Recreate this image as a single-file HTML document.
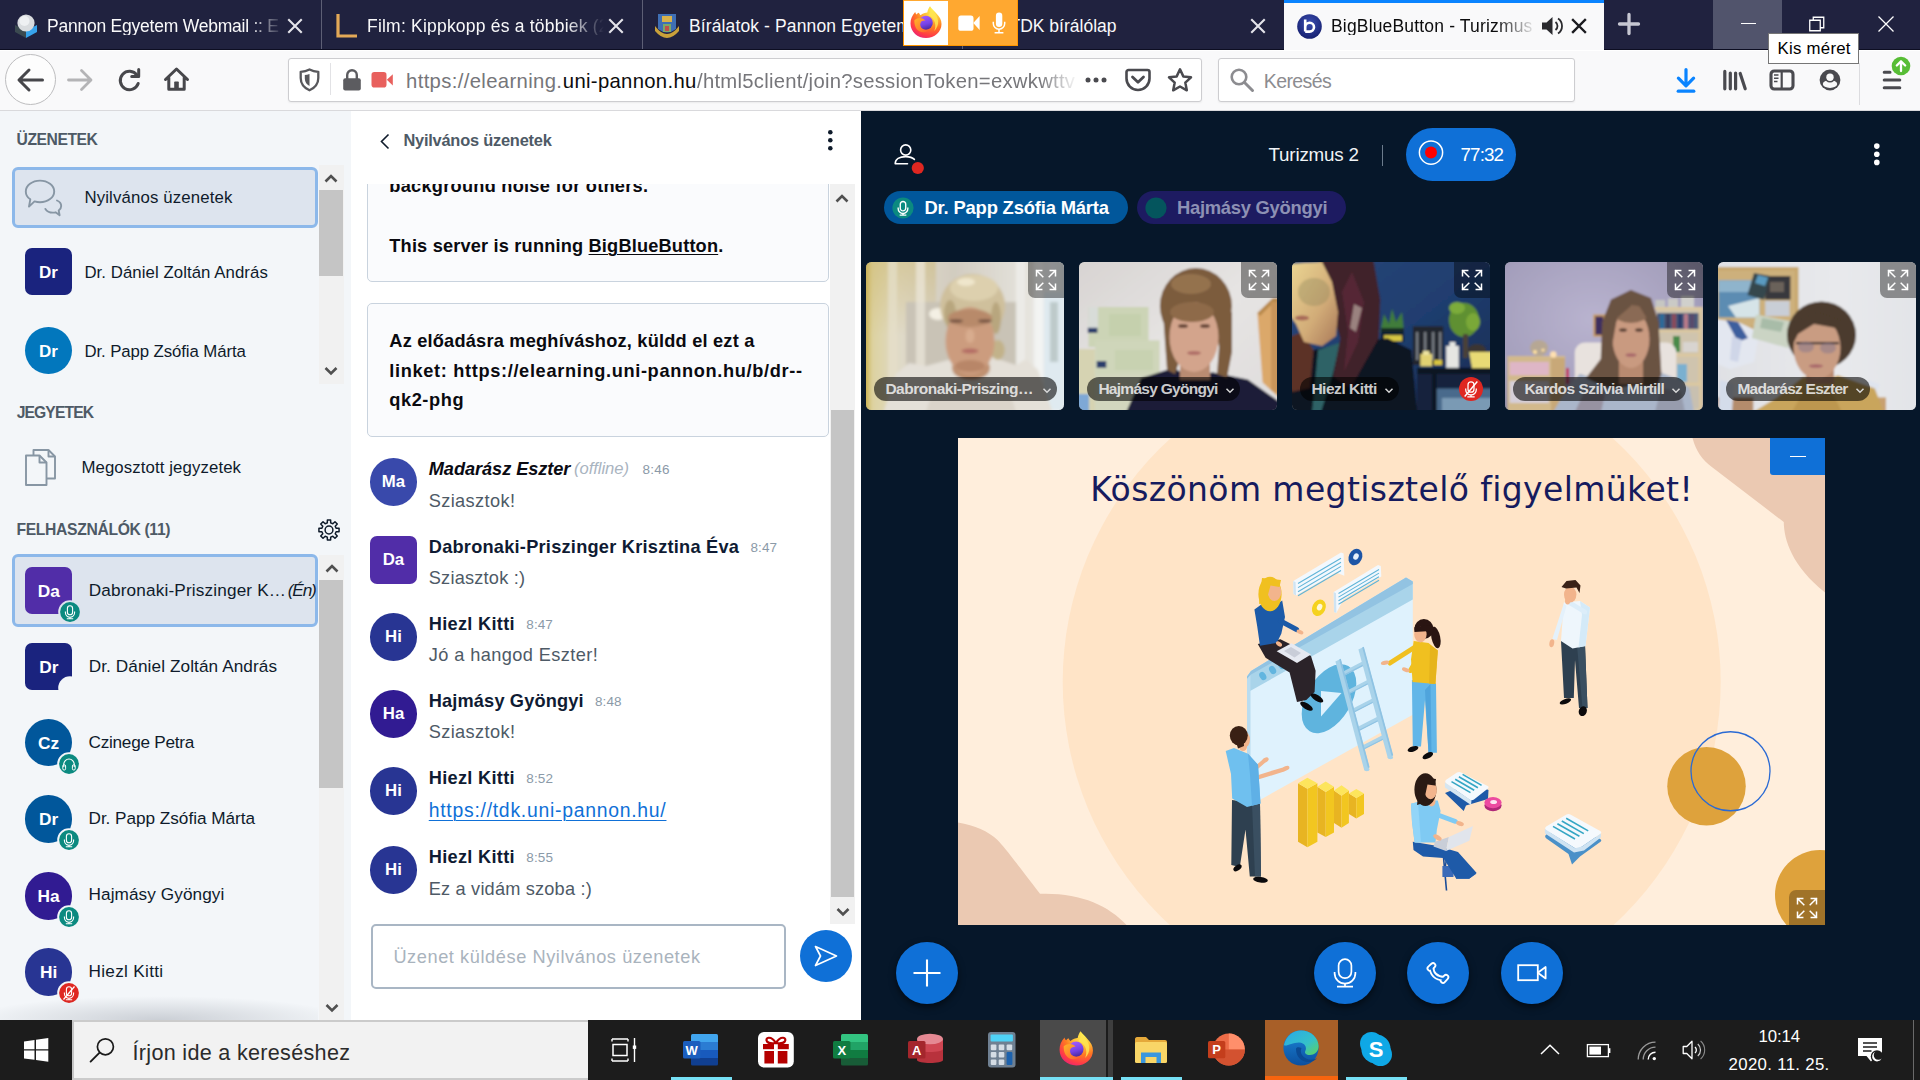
<!DOCTYPE html>
<html lang="hu"><head><meta charset="utf-8"><title>BigBlueButton - Turizmus 2</title>
<style>
html,body{margin:0;padding:0;}
body{width:1920px;height:1080px;overflow:hidden;position:relative;background:#fff;font-family:"Liberation Sans",sans-serif;}
div,span.t,svg{position:absolute;}
span.t{white-space:nowrap;display:block;}
svg{overflow:visible;}
</style></head>
<body>
<div style="left:0.00px;top:111.00px;width:351.00px;height:909.00px;background:#f3f6f9;"></div>
<span class="t" style="left:16.50px;top:132.21px;font-size:15.70px;line-height:15.70px;color:#4e5a66;font-weight:700;letter-spacing:-0.450px;">ÜZENETEK</span>
<div style="left:12.00px;top:167.00px;width:306.00px;height:61.00px;background:#dde4ee;border:3px solid #8cb8ea;border-radius:6px;box-sizing:border-box;"></div>
<svg style="left:24.00px;top:178.00px;" width="40" height="40" viewBox="0 0 40 40"><path d="M16,2.6 C23.8,2.6 30.2,7.4 30.2,13.4 C30.2,19.4 23.8,24.2 16,24.2 C14,24.2 12.2,23.9 10.5,23.4 L5,28.6 L6.3,21.3 C3.5,19.4 1.8,16.6 1.8,13.4 C1.8,7.4 8.2,2.6 16,2.6 Z" stroke="#8796a4" stroke-width="1.9" fill="none" stroke-linejoin="round"/><path d="M33,22.5 C35.6,23.6 37.2,25.6 37.2,28 C37.2,29.8 36.2,31.4 34.7,32.5 L35.6,37.2 L31.6,34.3 C30.8,34.5 29.9,34.6 29,34.6 C25.6,34.6 22.7,33.1 21.4,30.9" stroke="#8796a4" stroke-width="1.9" fill="none" stroke-linejoin="round" stroke-linecap="round"/></svg>
<span class="t" style="left:84.40px;top:190.33px;font-size:16.80px;line-height:16.80px;color:#0f1b2b;letter-spacing:0.145px;">Nyilvános üzenetek</span>
<div style="left:318.75px;top:164.50px;width:24.75px;height:219.50px;background:#f1f1f1;"></div><div style="left:319.35px;top:190.30px;width:23.55px;height:85.30px;background:#c5c5c5;"></div>
<svg style="left:324.20px;top:174.00px;" width="14" height="10" viewBox="0 0 14 10"><path d="M1.5,7.5 L7,2 L12.5,7.5" stroke="#505050" stroke-width="2.6" fill="none"/></svg>
<svg style="left:324.20px;top:366.00px;" width="14" height="10" viewBox="0 0 14 10"><path d="M1.5,2 L7,7.5 L12.5,2" stroke="#505050" stroke-width="2.6" fill="none"/></svg>
<div style="left:25.00px;top:248.00px;width:46.50px;height:46.50px;background:#1a237e;border-radius:7px;"></div>
<span class="t" style="left:8.50px;top:264.36px;width:80px;text-align:center;font-size:17.00px;line-height:17.00px;color:#fff;font-weight:700;">Dr</span>
<span class="t" style="left:84.40px;top:264.53px;font-size:16.80px;line-height:16.80px;color:#0f1b2b;letter-spacing:0.066px;">Dr. Dániel Zoltán András</span>
<div style="left:24.80px;top:327.30px;width:46.80px;height:46.80px;background:#0277bd;border-radius:50%;"></div>
<span class="t" style="left:8.50px;top:343.36px;width:80px;text-align:center;font-size:17.00px;line-height:17.00px;color:#fff;font-weight:700;">Dr</span>
<span class="t" style="left:84.40px;top:343.53px;font-size:16.80px;line-height:16.80px;color:#0f1b2b;letter-spacing:-0.091px;">Dr. Papp Zsófia Márta</span>
<span class="t" style="left:16.65px;top:405.16px;font-size:15.70px;line-height:15.70px;color:#4e5a66;font-weight:700;letter-spacing:-0.900px;">JEGYETEK</span>
<svg style="left:24.00px;top:447.00px;" width="34" height="40" viewBox="0 0 34 40"><path d="M9.5,8.5 V3 H24.5 L31,9.5 V31.5 H22.5" stroke="#8796a4" stroke-width="1.9" fill="none" stroke-linejoin="round"/><path d="M24.5,3 V9.5 H31" stroke="#8796a4" stroke-width="1.9" fill="none" stroke-linejoin="round"/><path d="M2,8.5 H15.5 L22.5,15.5 V38 H2 Z" stroke="#8796a4" stroke-width="1.9" fill="none" stroke-linejoin="round"/><path d="M15.5,8.5 V15.5 H22.5" stroke="#8796a4" stroke-width="1.9" fill="none" stroke-linejoin="round"/></svg>
<span class="t" style="left:81.40px;top:460.33px;font-size:16.80px;line-height:16.80px;color:#0f1b2b;letter-spacing:0.103px;">Megosztott jegyzetek</span>
<span class="t" style="left:16.50px;top:522.46px;font-size:15.70px;line-height:15.70px;color:#4e5a66;font-weight:700;letter-spacing:-0.344px;">FELHASZNÁLÓK (11)</span>
<svg style="left:318.00px;top:519.00px;" width="22" height="22" viewBox="-11 -11 22 22"><g stroke="#0f1b2b" stroke-width="1.5" fill="none"><circle cx="0" cy="0" r="3.9"/><polygon points="10.07,-1.63 10.07,1.63 7.10,1.70 6.22,3.82 8.27,5.97 5.97,8.27 3.82,6.22 1.70,7.10 1.63,10.07 -1.63,10.07 -1.70,7.10 -3.82,6.22 -5.97,8.27 -8.27,5.97 -6.22,3.82 -7.10,1.70 -10.07,1.63 -10.07,-1.63 -7.10,-1.70 -6.22,-3.82 -8.27,-5.97 -5.97,-8.27 -3.82,-6.22 -1.70,-7.10 -1.63,-10.07 1.63,-10.07 1.70,-7.10 3.82,-6.22 5.97,-8.27 8.27,-5.97 6.22,-3.82 7.10,-1.70" stroke-linejoin="round"/></g></svg>
<div style="left:12.00px;top:554.00px;width:306.00px;height:73.00px;background:#dde4ee;border:3px solid #8cb8ea;border-radius:6px;box-sizing:border-box;"></div>
<div style="left:318.75px;top:554.50px;width:24.75px;height:465.50px;background:#f1f1f1;"></div><div style="left:319.35px;top:580.00px;width:23.55px;height:208.00px;background:#c5c5c5;"></div>
<svg style="left:324.50px;top:563.80px;" width="14" height="10" viewBox="0 0 14 10"><path d="M1.5,7.5 L7,2 L12.5,7.5" stroke="#505050" stroke-width="2.6" fill="none"/></svg>
<svg style="left:324.50px;top:1003.30px;" width="14" height="10" viewBox="0 0 14 10"><path d="M1.5,2 L7,7.5 L12.5,2" stroke="#505050" stroke-width="2.6" fill="none"/></svg>
<div style="left:25.00px;top:567.00px;width:47.30px;height:47.30px;background:#512da8;border-radius:7px;"></div>
<span class="t" style="left:8.80px;top:582.71px;width:80px;text-align:center;font-size:17.30px;line-height:17.30px;color:#fff;font-weight:700;">Da</span>
<svg style="left:57.75px;top:599.50px;" width="24" height="24" viewBox="-12 -12 24 24"><circle cx="0" cy="0" r="11.8" fill="#dde4ee"/><circle cx="0" cy="0" r="9.9" fill="#0b8a80"/><rect x="-2.6" y="-6.2" width="5.2" height="9" rx="2.6" stroke="#fff" stroke-width="1.1" fill="none"/><path d="M-4.6,-0.5 V0.6 A4.6,4.6 0 0 0 4.6,0.6 V-0.5" stroke="#fff" stroke-width="1.1" fill="none"/><path d="M0,5.2 V6.6 M-3.2,6.8 H3.2" stroke="#fff" stroke-width="1.1" fill="none"/></svg>
<span class="t" style="left:88.70px;top:581.79px;font-size:17.20px;line-height:17.20px;color:#0f1b2b;letter-spacing:0.154px;">Dabronaki-Priszinger K…</span>
<span class="t" style="left:287.80px;top:581.79px;font-size:17.20px;line-height:17.20px;color:#0f1b2b;font-style:italic;letter-spacing:-1.161px;">(Én)</span>
<div style="left:25.00px;top:643.00px;width:47.30px;height:47.30px;background:#1a237e;border-radius:7px;"></div>
<span class="t" style="left:8.80px;top:658.71px;width:80px;text-align:center;font-size:17.30px;line-height:17.30px;color:#fff;font-weight:700;">Dr</span>
<svg style="left:57.75px;top:676.00px;" width="24" height="24" viewBox="-12 -12 24 24"><circle cx="0" cy="0" r="11.8" fill="#f3f6f9"/></svg>
<span class="t" style="left:88.70px;top:657.79px;font-size:17.20px;line-height:17.20px;color:#0f1b2b;letter-spacing:0.091px;">Dr. Dániel Zoltán András</span>
<div style="left:24.90px;top:719.00px;width:47.40px;height:47.40px;background:#01579b;border-radius:50%;"></div>
<span class="t" style="left:8.60px;top:734.91px;width:80px;text-align:center;font-size:17.30px;line-height:17.30px;color:#fff;font-weight:700;">Cz</span>
<svg style="left:57.30px;top:751.80px;" width="24" height="24" viewBox="-12 -12 24 24"><circle cx="0" cy="0" r="11.8" fill="#f3f6f9"/><circle cx="0" cy="0" r="9.9" fill="#0b8a80"/><path d="M-5.2,3 V0.2 A5.2,5.2 0 0 1 5.2,0.2 V3" stroke="#fff" stroke-width="1.1" fill="none"/><rect x="-6.2" y="0.8" width="2.8" height="5.2" rx="1.2" stroke="#fff" stroke-width="1" fill="none"/><rect x="3.4" y="0.8" width="2.8" height="5.2" rx="1.2" stroke="#fff" stroke-width="1" fill="none"/></svg>
<span class="t" style="left:88.50px;top:734.09px;font-size:17.20px;line-height:17.20px;color:#0f1b2b;letter-spacing:-0.260px;">Czinege Petra</span>
<div style="left:24.90px;top:795.40px;width:47.40px;height:47.40px;background:#01579b;border-radius:50%;"></div>
<span class="t" style="left:8.60px;top:811.31px;width:80px;text-align:center;font-size:17.30px;line-height:17.30px;color:#fff;font-weight:700;">Dr</span>
<svg style="left:57.30px;top:828.20px;" width="24" height="24" viewBox="-12 -12 24 24"><circle cx="0" cy="0" r="11.8" fill="#f3f6f9"/><circle cx="0" cy="0" r="9.9" fill="#0b8a80"/><rect x="-2.6" y="-6.2" width="5.2" height="9" rx="2.6" stroke="#fff" stroke-width="1.1" fill="none"/><path d="M-4.6,-0.5 V0.6 A4.6,4.6 0 0 0 4.6,0.6 V-0.5" stroke="#fff" stroke-width="1.1" fill="none"/><path d="M0,5.2 V6.6 M-3.2,6.8 H3.2" stroke="#fff" stroke-width="1.1" fill="none"/></svg>
<span class="t" style="left:88.50px;top:810.19px;font-size:17.20px;line-height:17.20px;color:#0f1b2b;letter-spacing:-0.034px;">Dr. Papp Zsófia Márta</span>
<div style="left:24.90px;top:872.20px;width:47.40px;height:47.40px;background:#311b92;border-radius:50%;"></div>
<span class="t" style="left:8.60px;top:888.11px;width:80px;text-align:center;font-size:17.30px;line-height:17.30px;color:#fff;font-weight:700;">Ha</span>
<svg style="left:57.30px;top:905.00px;" width="24" height="24" viewBox="-12 -12 24 24"><circle cx="0" cy="0" r="11.8" fill="#f3f6f9"/><circle cx="0" cy="0" r="9.9" fill="#0b8a80"/><rect x="-2.6" y="-6.2" width="5.2" height="9" rx="2.6" stroke="#fff" stroke-width="1.1" fill="none"/><path d="M-4.6,-0.5 V0.6 A4.6,4.6 0 0 0 4.6,0.6 V-0.5" stroke="#fff" stroke-width="1.1" fill="none"/><path d="M0,5.2 V6.6 M-3.2,6.8 H3.2" stroke="#fff" stroke-width="1.1" fill="none"/></svg>
<span class="t" style="left:88.50px;top:886.39px;font-size:17.20px;line-height:17.20px;color:#0f1b2b;letter-spacing:0.079px;">Hajmásy Gyöngyi</span>
<div style="left:24.90px;top:948.20px;width:47.40px;height:47.40px;background:#283593;border-radius:50%;"></div>
<span class="t" style="left:8.60px;top:964.11px;width:80px;text-align:center;font-size:17.30px;line-height:17.30px;color:#fff;font-weight:700;">Hi</span>
<svg style="left:57.30px;top:981.00px;" width="24" height="24" viewBox="-12 -12 24 24"><circle cx="0" cy="0" r="11.8" fill="#f3f6f9"/><circle cx="0" cy="0" r="9.9" fill="#df2721"/><rect x="-2.6" y="-6.2" width="5.2" height="9" rx="2.6" stroke="#fff" stroke-width="1.1" fill="none"/><path d="M-4.6,-0.5 V0.6 A4.6,4.6 0 0 0 4.6,0.6 V-0.5" stroke="#fff" stroke-width="1.1" fill="none"/><path d="M0,5.2 V6.6 M-3.2,6.8 H3.2" stroke="#fff" stroke-width="1.1" fill="none"/><path d="M-5.5,6.5 L5.5,-6.5" stroke="#fff" stroke-width="1.2"/></svg>
<span class="t" style="left:88.50px;top:962.59px;font-size:17.20px;line-height:17.20px;color:#0f1b2b;letter-spacing:0.306px;">Hiezl Kitti</span>
<div style="left:0.00px;top:996.00px;width:318.00px;height:24.00px;background:radial-gradient(ellipse 60% 100% at 50% 100%,rgba(40,50,70,0.20),rgba(40,50,70,0) 100%);"></div>
<div style="left:351.00px;top:111.00px;width:510.00px;height:909.00px;background:#fff;"></div>
<svg style="left:378.00px;top:133.00px;" width="14" height="17" viewBox="0 0 14 17"><path d="M10.5,1.5 L3.5,8.5 L10.5,15.5" stroke="#0f1b2b" stroke-width="1.6" fill="none"/></svg>
<span class="t" style="left:403.40px;top:132.07px;font-size:16.40px;line-height:16.40px;color:#4e5a66;font-weight:700;letter-spacing:-0.220px;">Nyilvános üzenetek</span>
<svg style="left:826.00px;top:128.00px;" width="9" height="24" viewBox="0 0 9 24"><circle cx="4.3" cy="4.2" r="2.3" fill="#0f1b2b"/><circle cx="4.3" cy="12.3" r="2.3" fill="#0f1b2b"/><circle cx="4.3" cy="20.3" r="2.3" fill="#0f1b2b"/></svg>
<div style="left:352.00px;top:184.00px;width:478.00px;height:738.00px;overflow:hidden;"><div style="left:15.00px;top:-64.00px;width:462.00px;height:161.70px;background:#fafbfd;border:1px solid #c9d3de;border-radius:5px;box-sizing:border-box;"></div>
<span class="t" style="left:37.30px;top:-7.36px;font-size:18.20px;line-height:18.20px;color:#0a0a0f;font-weight:700;letter-spacing:0.262px;">background noise for others.</span>
<span class="t" style="left:37.30px;top:53.04px;font-size:18.20px;line-height:18.20px;color:#0a0a0f;font-weight:700;letter-spacing:0.182px;">This server is running <span style="text-decoration:underline;text-decoration-thickness:1.3px;text-underline-offset:1.5px">BigBlueButton</span>.</span>
<div style="left:15.30px;top:119.20px;width:461.50px;height:133.50px;background:#fafbfd;border:1px solid #c9d3de;border-radius:5px;box-sizing:border-box;"></div>
<span class="t" style="left:37.30px;top:148.09px;font-size:18.20px;line-height:18.20px;color:#0a0a0f;font-weight:700;letter-spacing:0.210px;">Az előadásra meghíváshoz, küldd el ezt a</span>
<span class="t" style="left:37.30px;top:177.59px;font-size:18.20px;line-height:18.20px;color:#0a0a0f;font-weight:700;letter-spacing:0.662px;">linket: https://elearning.uni-pannon.hu/b/dr--</span>
<span class="t" style="left:37.30px;top:207.34px;font-size:18.20px;line-height:18.20px;color:#0a0a0f;font-weight:700;letter-spacing:0.578px;">qk2-phg</span>
<div style="left:17.90px;top:274.20px;width:47.20px;height:47.60px;background:#3949ab;border-radius:50%;"></div><span class="t" style="left:1.50px;top:290.23px;width:80px;text-align:center;font-size:16.80px;line-height:16.80px;color:#fff;font-weight:700;">Ma</span>
<span class="t" style="left:76.75px;top:276.34px;font-size:18.20px;line-height:18.20px;color:#0a0a12;font-weight:700;font-style:italic;letter-spacing:-0.060px;">Madarász Eszter</span>
<span class="t" style="left:222.00px;top:277.20px;font-size:16.60px;line-height:16.60px;color:#a9b4bf;font-style:italic;letter-spacing:-0.043px;">(offline)</span>
<span class="t" style="left:290.50px;top:279.32px;font-size:13.50px;line-height:13.50px;color:#8b9aa8;letter-spacing:0.240px;">8:46</span>
<span class="t" style="left:76.75px;top:308.09px;font-size:18.20px;line-height:18.20px;color:#4e5a66;letter-spacing:0.368px;">Sziasztok!</span>
<div style="left:17.80px;top:352.20px;width:47.20px;height:47.60px;background:#512da8;border-radius:7px;"></div><span class="t" style="left:1.40px;top:368.23px;width:80px;text-align:center;font-size:16.80px;line-height:16.80px;color:#fff;font-weight:700;">Da</span>
<span class="t" style="left:76.75px;top:353.74px;font-size:18.20px;line-height:18.20px;color:#0f1b33;font-weight:700;letter-spacing:0.242px;">Dabronaki-Priszinger Krisztina Éva</span>
<span class="t" style="left:398.50px;top:356.72px;font-size:13.50px;line-height:13.50px;color:#8b9aa8;letter-spacing:0.073px;">8:47</span>
<span class="t" style="left:76.75px;top:384.74px;font-size:18.20px;line-height:18.20px;color:#4e5a66;letter-spacing:0.209px;">Sziasztok :)</span>
<div style="left:17.90px;top:429.20px;width:47.20px;height:47.60px;background:#283593;border-radius:50%;"></div><span class="t" style="left:1.50px;top:445.23px;width:80px;text-align:center;font-size:16.80px;line-height:16.80px;color:#fff;font-weight:700;">Hi</span>
<span class="t" style="left:76.75px;top:430.94px;font-size:18.20px;line-height:18.20px;color:#0f1b33;font-weight:700;letter-spacing:0.304px;">Hiezl Kitti</span>
<span class="t" style="left:174.30px;top:433.92px;font-size:13.50px;line-height:13.50px;color:#8b9aa8;letter-spacing:0.073px;">8:47</span>
<span class="t" style="left:76.75px;top:461.84px;font-size:18.20px;line-height:18.20px;color:#4e5a66;letter-spacing:0.401px;">Jó a hangod Eszter!</span>
<div style="left:17.90px;top:506.20px;width:47.20px;height:47.60px;background:#311b92;border-radius:50%;"></div><span class="t" style="left:1.50px;top:522.23px;width:80px;text-align:center;font-size:16.80px;line-height:16.80px;color:#fff;font-weight:700;">Ha</span>
<span class="t" style="left:76.75px;top:508.24px;font-size:18.20px;line-height:18.20px;color:#0f1b33;font-weight:700;letter-spacing:0.154px;">Hajmásy Gyöngyi</span>
<span class="t" style="left:242.90px;top:511.22px;font-size:13.50px;line-height:13.50px;color:#8b9aa8;letter-spacing:0.140px;">8:48</span>
<span class="t" style="left:76.75px;top:539.14px;font-size:18.20px;line-height:18.20px;color:#4e5a66;letter-spacing:0.368px;">Sziasztok!</span>
<div style="left:17.90px;top:583.30px;width:47.20px;height:47.60px;background:#283593;border-radius:50%;"></div><span class="t" style="left:1.50px;top:599.33px;width:80px;text-align:center;font-size:16.80px;line-height:16.80px;color:#fff;font-weight:700;">Hi</span>
<span class="t" style="left:76.75px;top:584.94px;font-size:18.20px;line-height:18.20px;color:#0f1b33;font-weight:700;letter-spacing:0.304px;">Hiezl Kitti</span>
<span class="t" style="left:174.30px;top:587.92px;font-size:13.50px;line-height:13.50px;color:#8b9aa8;letter-spacing:0.140px;">8:52</span>
<span class="t" style="left:76.75px;top:616.73px;font-size:19.40px;line-height:19.40px;color:#0f70d7;letter-spacing:0.726px;text-decoration:underline;text-decoration-thickness:1.3px;text-underline-offset:2.5px;">https://tdk.uni-pannon.hu/</span>
<div style="left:17.90px;top:662.30px;width:47.20px;height:47.60px;background:#283593;border-radius:50%;"></div><span class="t" style="left:1.50px;top:678.33px;width:80px;text-align:center;font-size:16.80px;line-height:16.80px;color:#fff;font-weight:700;">Hi</span>
<span class="t" style="left:76.75px;top:664.14px;font-size:18.20px;line-height:18.20px;color:#0f1b33;font-weight:700;letter-spacing:0.304px;">Hiezl Kitti</span>
<span class="t" style="left:174.30px;top:667.12px;font-size:13.50px;line-height:13.50px;color:#8b9aa8;letter-spacing:0.140px;">8:55</span>
<span class="t" style="left:76.75px;top:695.54px;font-size:18.20px;line-height:18.20px;color:#4e5a66;letter-spacing:0.182px;">Ez a vidám szoba :)</span></div>
<div style="left:830.00px;top:184.00px;width:24.70px;height:739.50px;background:#f1f1f1;"></div><div style="left:830.60px;top:410.00px;width:23.50px;height:487.40px;background:#c5c5c5;"></div>
<svg style="left:835.40px;top:193.60px;" width="14" height="10" viewBox="0 0 14 10"><path d="M1.5,7.5 L7,2 L12.5,7.5" stroke="#505050" stroke-width="2.6" fill="none"/></svg>
<svg style="left:835.50px;top:906.50px;" width="14" height="10" viewBox="0 0 14 10"><path d="M1.5,2 L7,7.5 L12.5,2" stroke="#505050" stroke-width="2.6" fill="none"/></svg>
<div style="left:371.40px;top:923.50px;width:414.60px;height:65.20px;background:#fff;border:2px solid #a9b6c4;border-radius:5px;box-sizing:border-box;"></div>
<span class="t" style="left:393.40px;top:947.84px;font-size:18.20px;line-height:18.20px;color:#a9b3bd;letter-spacing:0.577px;">Üzenet küldése Nyilvános üzenetek</span>
<div style="left:800.00px;top:930.00px;width:52.00px;height:52.00px;background:#0f70d7;border-radius:50%;"></div>
<svg style="left:813.00px;top:944.00px;" width="26" height="24" viewBox="0 0 26 24"><path d="M2.5,2.5 L23.5,12 L2.5,21.5 L7.5,12 Z" stroke="#fff" stroke-width="1.7" fill="none" stroke-linejoin="round"/></svg>
<div style="left:861.00px;top:111.00px;width:1059.00px;height:909.00px;background:#06172a;"></div>
<svg style="left:893.00px;top:142.00px;" width="28" height="34" viewBox="0 0 28 34"><circle cx="12.7" cy="8" r="5.1" stroke="#fff" stroke-width="1.6" fill="none"/><path d="M2.2,21.8 C2.2,17.2 6.6,14.6 12.7,14.6 C16.6,14.6 19.6,15.6 21.4,17.4 M2.2,21.8 H14.5" stroke="#fff" stroke-width="1.6" fill="none" stroke-linecap="round"/><circle cx="24.8" cy="26" r="6.1" fill="#df2721"/></svg>
<span class="t" style="left:1268.50px;top:146.24px;font-size:18.80px;line-height:18.80px;color:#f0f3f6;letter-spacing:-0.188px;">Turizmus 2</span>
<div style="left:1382.20px;top:144.50px;width:1.30px;height:21.50px;background:#6b7b8c;"></div>
<div style="left:1405.80px;top:127.70px;width:110.50px;height:53.20px;background:#0f70d7;border-radius:27px;"></div>
<svg style="left:1417.00px;top:139.00px;" width="28" height="28" viewBox="0 0 28 28"><circle cx="14" cy="13.6" r="11.6" stroke="#fff" stroke-width="1.5" fill="none"/><circle cx="14" cy="13.6" r="6" fill="#f00"/></svg>
<span class="t" style="left:1460.60px;top:146.24px;font-size:18.80px;line-height:18.80px;color:#fff;letter-spacing:-0.925px;">77:32</span>
<svg style="left:1872.00px;top:142.00px;" width="10" height="25" viewBox="0 0 10 25"><circle cx="4.8" cy="4.1" r="2.8" fill="#fff"/><circle cx="4.8" cy="12.3" r="2.8" fill="#fff"/><circle cx="4.8" cy="20.4" r="2.8" fill="#fff"/></svg>
<div style="left:884.30px;top:191.20px;width:243.70px;height:32.60px;background:#01579b;border-radius:17px;"></div>
<svg style="left:892.00px;top:196.50px;" width="22" height="22" viewBox="-11 -11 22 22"><circle cx="0" cy="0" r="10.6" fill="#0b8a80"/><g transform="scale(1.05)"><rect x="-2.6" y="-6.2" width="5.2" height="9" rx="2.6" stroke="#fff" stroke-width="1.3" fill="none"/><path d="M-4.6,-0.5 V0.6 A4.6,4.6 0 0 0 4.6,0.6 V-0.5" stroke="#fff" stroke-width="1.3" fill="none"/><path d="M0,5.2 V6.6 M-3.2,6.8 H3.2" stroke="#fff" stroke-width="1.3" fill="none"/></g></svg>
<span class="t" style="left:924.50px;top:199.47px;font-size:18.40px;line-height:18.40px;color:#fff;font-weight:700;letter-spacing:-0.177px;">Dr. Papp Zsófia Márta</span>
<div style="left:1137.00px;top:191.20px;width:209.30px;height:32.60px;background:#1d1b61;border-radius:17px;"></div>
<svg style="left:1144.50px;top:196.50px;" width="22" height="22" viewBox="0 0 22 22"><circle cx="11" cy="11" r="10.6" fill="#04555d"/></svg>
<span class="t" style="left:1177.00px;top:199.47px;font-size:18.40px;line-height:18.40px;color:#8d91b4;font-weight:700;letter-spacing:-0.275px;">Hajmásy Gyöngyi</span>
<div style="left:866.00px;top:261.80px;width:198.00px;height:148.00px;border-radius:5.5px;overflow:hidden;background:#888;"><svg style="left:0;top:0" width="198" height="148" viewBox="0 0 198 148"><defs><filter id="pb0" x="-10%" y="-10%" width="120%" height="120%"><feGaussianBlur stdDeviation="1.4"/></filter><linearGradient id="p0a" x1="0" y1="0" x2="1" y2="0"><stop offset="0" stop-color="#8f7a1c"/><stop offset="0.035" stop-color="#c4a838"/><stop offset="0.075" stop-color="#ddd2a0"/><stop offset="0.2" stop-color="#e0dac8"/><stop offset="0.45" stop-color="#d2ccc0"/><stop offset="0.8" stop-color="#e6e4de"/><stop offset="0.9" stop-color="#eef2f4"/><stop offset="1" stop-color="#dfe6e8"/></linearGradient><linearGradient id="p0b" x1="0" y1="0" x2="0" y2="1"><stop offset="0" stop-color="#c8b060" stop-opacity="0.45"/><stop offset="0.5" stop-color="#c8b060" stop-opacity="0"/></linearGradient></defs><g filter="url(#pb0)"><rect x="-10.0" y="-10.0" width="218.0" height="168.0" fill="url(#p0a)" /><rect x="-10.0" y="-10.0" width="80.0" height="168.0" fill="url(#p0b)" /><rect x="40.0" y="40.0" width="110.0" height="70.0" fill="#c9c3b6" /><ellipse cx="72.0" cy="52.0" rx="9.0" ry="6.0" fill="#f4f0e4" /><rect x="22.0" y="-5.0" width="9.0" height="160.0" fill="#e6e0cc" opacity="0.7"/><rect x="50.0" y="-5.0" width="9.0" height="160.0" fill="#ece8dc" opacity="0.7"/><rect x="150.0" y="-5.0" width="9.0" height="160.0" fill="#f0efec" opacity="0.7"/><rect x="168.0" y="-5.0" width="9.0" height="160.0" fill="#f6f8f8" opacity="0.7"/><rect x="178.0" y="30.0" width="20.0" height="118.0" fill="#dfeaf0" /><rect x="184.0" y="40.0" width="8.0" height="60.0" fill="#a8b4b0" opacity="0.6"/><polygon points="17.7,150.0 30.0,112.0 42.9,101.0 60.0,104.0 85.9,96.9 127.0,95.4 150.0,103.0 160.0,97.0 172.0,108.0 186.6,150.0" fill="#e4e0d8" /><polygon points="60.0,150.0 70.0,118.0 140.0,118.0 150.0,150.0" fill="#dad4ca" /><ellipse cx="105.0" cy="106.0" rx="19.0" ry="12.0" fill="#bf9070" /><ellipse cx="131.8" cy="88.0" rx="7.0" ry="10.0" fill="#c2b28a" /><ellipse cx="106.6" cy="44.0" rx="32.5" ry="32.0" fill="#cfc09c" /><ellipse cx="108.0" cy="26.0" rx="24.0" ry="13.0" fill="#ddd0ae" /><ellipse cx="100.0" cy="20.0" rx="9.0" ry="4.0" fill="#efe6cc" /><ellipse cx="84.0" cy="52.0" rx="6.0" ry="14.0" fill="#b8a67e" /><ellipse cx="130.0" cy="56.0" rx="5.0" ry="16.0" fill="#b8a67e" /><ellipse cx="104.0" cy="79.0" rx="24.5" ry="34.0" fill="#cc9c7e" /><ellipse cx="104.0" cy="56.0" rx="22.0" ry="9.0" fill="#b88a6a" /><ellipse cx="90.0" cy="59.0" rx="7.0" ry="1.6" fill="#6a4a3c" /><ellipse cx="119.0" cy="59.0" rx="7.0" ry="1.6" fill="#6a4a3c" /><ellipse cx="104.0" cy="74.0" rx="4.5" ry="7.0" fill="#d8ac8e" /><ellipse cx="104.0" cy="89.0" rx="8.5" ry="2.6" fill="#b46c64" /><ellipse cx="104.0" cy="104.0" rx="15.0" ry="6.0" fill="#b88668" /></g></svg><div style="left:162.00px;top:0.00px;width:36.00px;height:36.30px;background:rgba(0,0,0,0.4);border-radius:0 5px 0 7px;"></div><svg style="left:168.00px;top:6.20px;" width="24" height="24" viewBox="-12 -12 24 24"><g stroke="#fff" stroke-width="1.5" fill="none" stroke-linecap="square"><path d="M-9.5,-9.5 L-3.2,-3.2 M-9.5,-4.3 V-9.5 H-4.3"/><path d="M9.5,-9.5 L3.2,-3.2 M9.5,-4.3 V-9.5 H4.3"/><path d="M-9.5,9.5 L-3.2,3.2 M-9.5,4.3 V9.5 H-4.3"/><path d="M9.5,9.5 L3.2,3.2 M9.5,4.3 V9.5 H4.3"/></g></svg><div style="left:8.00px;top:115.40px;width:183.00px;height:23.60px;background:rgba(0,0,0,0.58);border-radius:12px;"></div></div>
<span class="t" style="left:885.40px;top:381.23px;font-size:15.50px;line-height:15.50px;color:rgba(255,255,255,0.8);font-weight:700;letter-spacing:-0.486px;">Dabronaki-Priszing…</span>
<svg style="left:1042.40px;top:386.50px;" width="10" height="7" viewBox="0 0 10 7"><path d="M1.5,1.8 L5,5.2 L8.5,1.8" stroke="#d8d8d8" stroke-width="1.5" fill="none"/></svg>
<div style="left:1079.00px;top:261.80px;width:198.00px;height:148.00px;border-radius:5.5px;overflow:hidden;background:#888;"><svg style="left:0;top:0" width="198" height="148" viewBox="0 0 198 148"><defs><filter id="pb1" x="-10%" y="-10%" width="120%" height="120%"><feGaussianBlur stdDeviation="1.3"/></filter><linearGradient id="p1a" x1="0" y1="0" x2="1" y2="1"><stop offset="0" stop-color="#d6d2d0"/><stop offset="0.5" stop-color="#e6e4e3"/><stop offset="1" stop-color="#dedcdc"/></linearGradient></defs><g filter="url(#pb1)"><rect x="-10.0" y="-10.0" width="218.0" height="168.0" fill="url(#p1a)" /><rect x="9.5" y="45.0" width="60.0" height="40.0" fill="#ccd4b6" /><rect x="16.2" y="78.4" width="64.4" height="37.6" fill="#cfd6ba" /><rect x="-5.0" y="87.0" width="21.0" height="63.0" fill="#d6d3b2" /><rect x="16.0" y="112.0" width="72.0" height="38.0" fill="#d2d6be" /><rect x="9.5" y="45.0" width="9.5" height="21.0" fill="#d8dcd8" /><rect x="30.0" y="52.0" width="32.0" height="22.0" fill="#c2cfaa" opacity="0.7"/><rect x="36.0" y="88.0" width="38.0" height="20.0" fill="#c5d0ae" opacity="0.7"/><rect x="8.8" y="65.8" width="9.6" height="5.2" fill="#2c3c6c" /><rect x="17.7" y="99.0" width="9.6" height="6.8" fill="#2c3c6c" /><rect x="-5.0" y="132.0" width="15.0" height="18.0" fill="#7ea8d6" /><polygon points="178.4,51.0 194.0,36.0 205.0,36.0 205.0,140.0 183.6,120.6" fill="#dba86a" /><polygon points="178.4,51.0 194.0,36.0 205.0,36.0 205.0,40.0 195.0,40.0 181.0,54.0" fill="#b98a4c" /><polygon points="192.0,40.0 205.0,40.0 205.0,135.0 192.0,128.0" fill="#c9955a" /><polygon points="47.3,150.0 62.1,116.2 94.7,105.8 114.0,117.6 133.2,110.2 168.8,117.6 205.0,143.0 205.0,150.0" fill="#1b1e38" /><rect x="101.0" y="98.0" width="30.0" height="20.0" fill="#b98c72" /><ellipse cx="116.9" cy="44.0" rx="36.0" ry="38.0" fill="#7b5c3e" /><polygon points="84.0,50.0 102.0,50.0 100.0,100.0 96.0,112.0 88.0,108.0 86.0,80.0" fill="#7b5c3e" /><polygon points="134.0,50.0 153.0,50.0 153.0,90.0 148.0,116.0 138.0,112.0 140.0,85.0" fill="#7b5c3e" /><ellipse cx="112.0" cy="22.0" rx="20.0" ry="10.0" fill="#94724e" /><ellipse cx="115.0" cy="75.0" rx="24.5" ry="35.0" fill="#d3a48c" /><ellipse cx="113.0" cy="50.0" rx="22.0" ry="10.0" fill="#8e6a48" /><ellipse cx="104.0" cy="64.0" rx="5.0" ry="2.0" fill="#6a4a3a" /><ellipse cx="126.0" cy="64.0" rx="5.0" ry="2.0" fill="#6a4a3a" /><ellipse cx="115.0" cy="91.0" rx="7.0" ry="2.0" fill="#b07068" /></g></svg><div style="left:162.00px;top:0.00px;width:36.00px;height:36.30px;background:rgba(0,0,0,0.4);border-radius:0 5px 0 7px;"></div><svg style="left:168.00px;top:6.20px;" width="24" height="24" viewBox="-12 -12 24 24"><g stroke="#fff" stroke-width="1.5" fill="none" stroke-linecap="square"><path d="M-9.5,-9.5 L-3.2,-3.2 M-9.5,-4.3 V-9.5 H-4.3"/><path d="M9.5,-9.5 L3.2,-3.2 M9.5,-4.3 V-9.5 H4.3"/><path d="M-9.5,9.5 L-3.2,3.2 M-9.5,4.3 V9.5 H-4.3"/><path d="M9.5,9.5 L3.2,3.2 M9.5,4.3 V9.5 H4.3"/></g></svg><div style="left:8.00px;top:115.40px;width:152.60px;height:23.60px;background:rgba(0,0,0,0.58);border-radius:12px;"></div></div>
<span class="t" style="left:1098.40px;top:381.23px;font-size:15.50px;line-height:15.50px;color:rgba(255,255,255,0.8);font-weight:700;letter-spacing:-0.720px;">Hajmásy Gyöngyi</span>
<svg style="left:1225.00px;top:386.50px;" width="10" height="7" viewBox="0 0 10 7"><path d="M1.5,1.8 L5,5.2 L8.5,1.8" stroke="#d8d8d8" stroke-width="1.5" fill="none"/></svg>
<div style="left:1292.00px;top:261.80px;width:198.00px;height:148.00px;border-radius:5.5px;overflow:hidden;background:#888;"><svg style="left:0;top:0" width="198" height="148" viewBox="0 0 198 148"><defs><filter id="pb2" x="-10%" y="-10%" width="120%" height="120%"><feGaussianBlur stdDeviation="1.3"/></filter><linearGradient id="p2a" x1="0" y1="0" x2="1" y2="1"><stop offset="0" stop-color="#2a4878"/><stop offset="0.5" stop-color="#203e70"/><stop offset="1" stop-color="#15294c"/></linearGradient><linearGradient id="p2f" x1="0" y1="0" x2="1" y2="1"><stop offset="0" stop-color="#ecd894"/><stop offset="0.6" stop-color="#d2ac78"/><stop offset="1" stop-color="#a87858"/></linearGradient></defs><g filter="url(#pb2)"><rect x="-10.0" y="-10.0" width="218.0" height="168.0" fill="url(#p2a)" /><rect x="125.0" y="111.0" width="80.0" height="39.0" fill="#15223c" /><rect x="144.6" y="126.5" width="60.4" height="23.5" fill="#4a6a8c" /><rect x="150.0" y="136.0" width="50.0" height="14.0" fill="#7a9ab4" /><rect x="125.0" y="105.8" width="80.0" height="6.2" fill="#0c1424" /><rect x="140.0" y="112.0" width="4.5" height="38.0" fill="#0c1424" /><rect x="120.9" y="64.3" width="30.4" height="38.7" fill="#22252d" /><rect x="124.0" y="70.0" width="2.4" height="28.0" fill="#8d9198" opacity="0.8"/><rect x="132.0" y="70.0" width="2.4" height="28.0" fill="#8d9198" opacity="0.8"/><rect x="140.0" y="70.0" width="2.4" height="28.0" fill="#8d9198" opacity="0.8"/><rect x="147.0" y="70.0" width="2.4" height="28.0" fill="#8d9198" opacity="0.8"/><rect x="142.0" y="98.0" width="8.0" height="5.0" fill="#d8c440" /><polygon points="88.3,70.0 92.0,52.0 97.0,62.0 100.0,46.5 104.0,60.0 110.0,50.0 112.0,70.0" fill="#3f7c3a" /><rect x="89.0" y="66.0" width="23.0" height="14.0" fill="#0e1420" opacity="0.8"/><rect x="92.0" y="73.2" width="18.0" height="5.8" fill="#d6c642" /><ellipse cx="172.0" cy="58.0" rx="15.0" ry="17.0" fill="#5f9030" /><ellipse cx="165.0" cy="46.0" rx="8.0" ry="6.0" fill="#7cac3a" /><ellipse cx="181.0" cy="60.0" rx="7.0" ry="9.0" fill="#7aa838" /><rect x="171.0" y="72.0" width="5.0" height="24.0" fill="#4a4038" /><ellipse cx="185.0" cy="88.0" rx="9.0" ry="6.0" fill="#3a3430" /><polygon points="177.2,90.0 205.0,90.0 205.0,106.0 180.0,106.0" fill="#e8da74" /><rect x="154.2" y="84.0" width="12.6" height="21.8" fill="#e6e6e2" /><rect x="157.5" y="80.0" width="6.0" height="5.0" fill="#e6e6e2" /><rect x="128.3" y="92.0" width="11.8" height="12.3" fill="#e2d272" /><rect x="131.0" y="89.0" width="6.5" height="4.0" fill="#eee4a0" /><polygon points="-5.0,150.0 -5.0,105.8 21.6,88.0 58.7,80.6 95.7,76.2 119.4,88.0 125.3,150.0" fill="#0e1220" /><polygon points="26.0,88.0 48.3,80.6 40.9,111.7 29.0,150.0 20.0,150.0 23.9,111.7" fill="#2e6266" /><polygon points="27.0,-5.0 80.9,-5.0 88.3,37.6 86.8,76.2 75.0,96.9 58.7,126.5 40.9,114.7 48.3,76.2 36.4,37.6 27.6,11.0" fill="#3f2129" /><polygon points="60.0,10.0 72.0,40.0 66.0,80.0 52.0,110.0 56.0,70.0 50.0,30.0" fill="#5a2a38" opacity="0.8"/><polygon points="-5.0,76.0 10.0,70.0 21.6,88.0 18.0,126.0 0.0,130.0 -5.0,120.0" fill="#5c3228" /><polygon points="62.0,42.0 70.0,46.0 64.0,70.0 58.0,66.0" fill="#b8a8a0" opacity="0.7"/><polygon points="-5.0,2.0 30.0,0.0 40.0,20.0 46.0,50.0 44.0,74.0 30.0,84.0 12.0,80.0 4.0,62.0 -5.0,50.0" fill="url(#p2f)" /><ellipse cx="22.0" cy="30.0" rx="16.0" ry="14.0" fill="#8a8458" opacity="0.35"/><ellipse cx="10.0" cy="56.0" rx="7.0" ry="2.4" fill="#a86a58" /></g></svg><div style="left:162.00px;top:0.00px;width:36.00px;height:36.30px;background:rgba(0,0,0,0.4);border-radius:0 5px 0 7px;"></div><svg style="left:168.00px;top:6.20px;" width="24" height="24" viewBox="-12 -12 24 24"><g stroke="#fff" stroke-width="1.5" fill="none" stroke-linecap="square"><path d="M-9.5,-9.5 L-3.2,-3.2 M-9.5,-4.3 V-9.5 H-4.3"/><path d="M9.5,-9.5 L3.2,-3.2 M9.5,-4.3 V-9.5 H4.3"/><path d="M-9.5,9.5 L-3.2,3.2 M-9.5,4.3 V9.5 H-4.3"/><path d="M9.5,9.5 L3.2,3.2 M9.5,4.3 V9.5 H4.3"/></g></svg><div style="left:8.00px;top:115.40px;width:98.80px;height:23.60px;background:rgba(0,0,0,0.58);border-radius:12px;"></div></div>
<span class="t" style="left:1311.40px;top:381.23px;font-size:15.50px;line-height:15.50px;color:rgba(255,255,255,0.8);font-weight:700;letter-spacing:-0.463px;">Hiezl Kitti</span>
<svg style="left:1384.20px;top:386.50px;" width="10" height="7" viewBox="0 0 10 7"><path d="M1.5,1.8 L5,5.2 L8.5,1.8" stroke="#d8d8d8" stroke-width="1.5" fill="none"/></svg>
<svg style="left:1459.00px;top:377.40px;" width="24" height="24" viewBox="-12 -12 24 24"><circle cx="0" cy="0" r="12" fill="#df2721"/><g transform="scale(1.15)"><rect x="-2.6" y="-6.2" width="5.2" height="9" rx="2.6" stroke="#fff" stroke-width="1.1" fill="none"/><path d="M-4.6,-0.5 V0.6 A4.6,4.6 0 0 0 4.6,0.6 V-0.5" stroke="#fff" stroke-width="1.1" fill="none"/><path d="M0,5.2 V6.6 M-3.2,6.8 H3.2" stroke="#fff" stroke-width="1.1" fill="none"/><path d="M-5.5,6.5 L5.5,-6.5" stroke="#fff" stroke-width="1.2"/></g></svg>
<div style="left:1505.00px;top:261.80px;width:198.00px;height:148.00px;border-radius:5.5px;overflow:hidden;background:#888;"><svg style="left:0;top:0" width="198" height="148" viewBox="0 0 198 148"><defs><filter id="pb3" x="-10%" y="-10%" width="120%" height="120%"><feGaussianBlur stdDeviation="1.3"/></filter><radialGradient id="p3a" cx="0.45" cy="0.4" r="0.8"><stop offset="0" stop-color="#b9b3cf"/><stop offset="0.6" stop-color="#a49fbc"/><stop offset="1" stop-color="#7d7a98"/></radialGradient></defs><g filter="url(#pb3)"><rect x="-10.0" y="-10.0" width="218.0" height="168.0" fill="url(#p3a)" /><rect x="151.3" y="45.0" width="44.4" height="105.0" fill="#cfc4ae" /><rect x="193.0" y="45.0" width="5.0" height="105.0" fill="#d9c6a0" /><rect x="152.0" y="51.0" width="41.5" height="16.3" fill="#4a5878" /><rect x="155.0" y="52.0" width="4.0" height="15.0" fill="#2a6a9a" /><rect x="161.0" y="52.0" width="4.0" height="15.0" fill="#3a3a5a" /><rect x="167.0" y="52.0" width="4.0" height="15.0" fill="#8a4a5a" /><rect x="173.0" y="52.0" width="4.0" height="15.0" fill="#2a3a6a" /><rect x="179.0" y="52.0" width="4.0" height="15.0" fill="#b87a8a" /><rect x="185.0" y="52.0" width="4.0" height="15.0" fill="#5a4a6a" /><rect x="150.0" y="45.0" width="47.0" height="3.0" fill="#dcc8a0" /><rect x="150.0" y="67.3" width="47.0" height="3.0" fill="#dcc8a0" /><rect x="150.0" y="91.7" width="47.0" height="3.0" fill="#dcc8a0" /><rect x="150.0" y="120.6" width="47.0" height="3.0" fill="#dcc8a0" /><rect x="150.5" y="38.0" width="9.5" height="7.0" fill="#c6c6c2" /><rect x="163.0" y="36.5" width="10.0" height="8.5" fill="#cacac6" /><rect x="176.0" y="34.0" width="13.0" height="11.0" fill="#d0d0cc" /><rect x="168.0" y="74.0" width="7.0" height="16.0" fill="#4a8a4a" /><rect x="178.0" y="80.0" width="15.0" height="10.0" fill="#d8d4d0" /><rect x="172.0" y="102.0" width="10.0" height="18.0" fill="#7ab0d0" /><rect x="184.0" y="124.0" width="10.0" height="22.0" fill="#c8c0b0" /><rect x="88.3" y="52.5" width="11.8" height="22.2" fill="#c89a5c" /><rect x="90.3" y="54.5" width="7.8" height="18.2" fill="#3e2e60" /><rect x="2.4" y="94.0" width="57.7" height="56.0" fill="#d2b98c" /><rect x="4.6" y="99.9" width="39.3" height="13.3" fill="#deb6c6" /><rect x="4.6" y="119.0" width="39.3" height="22.0" fill="#d6cfd8" /><rect x="46.0" y="96.0" width="14.0" height="54.0" fill="#c8a878" /><ellipse cx="34.0" cy="86.0" rx="9.0" ry="8.0" fill="#b9a888" opacity="0.8"/><ellipse cx="48.3" cy="92.5" rx="3.2" ry="3.2" fill="#ffe0b0" /><ellipse cx="30.0" cy="90.0" rx="2.0" ry="2.0" fill="#ffe0a0" /><ellipse cx="38.0" cy="88.0" rx="1.6" ry="1.6" fill="#ffe0a0" /><rect x="61.0" y="106.0" width="3.0" height="16.0" fill="#c03060" /><rect x="69.8" y="80.6" width="101.5" height="80" rx="10" fill="#e8e2de"/><polygon points="48.3,150.0 62.0,126.0 75.0,111.7 104.6,122.0 125.3,126.5 155.0,110.2 175.0,118.0 184.6,126.5 189.0,150.0" fill="#aab6ca" /><polygon points="70.0,150.0 80.0,128.0 100.0,132.0 96.0,150.0" fill="#8a7a86" opacity="0.6"/><polygon points="150.0,150.0 156.0,126.0 176.0,130.0 180.0,150.0" fill="#8a8a9a" opacity="0.6"/><polygon points="126.0,28.0 146.0,36.0 153.5,59.9 156.4,111.7 152.0,126.5 134.2,123.6 104.6,126.5 80.9,116.2 95.7,96.9 97.2,59.9 106.0,37.6" fill="#6b5242" /><rect x="114.0" y="98.0" width="24.0" height="24.0" fill="#b98a70" /><ellipse cx="126.0" cy="77.0" rx="18.5" ry="29.0" fill="#c99a80" /><ellipse cx="126.0" cy="52.0" rx="17.0" ry="9.0" fill="#8a6a54" /><ellipse cx="118.0" cy="68.0" rx="4.0" ry="1.8" fill="#5a4034" /><ellipse cx="134.0" cy="68.0" rx="4.0" ry="1.8" fill="#5a4034" /><ellipse cx="126.0" cy="93.0" rx="5.5" ry="1.8" fill="#a8686a" /><polygon points="104.0,45.0 115.0,34.0 126.0,28.0 126.0,44.0 112.0,56.0 106.0,90.0 98.0,100.0 98.0,60.0" fill="#6b5242" /><polygon points="146.0,40.0 153.5,59.9 155.0,100.0 146.0,96.0 144.0,60.0 132.0,40.0" fill="#6b5242" /></g></svg><div style="left:162.00px;top:0.00px;width:36.00px;height:36.30px;background:rgba(0,0,0,0.4);border-radius:0 5px 0 7px;"></div><svg style="left:168.00px;top:6.20px;" width="24" height="24" viewBox="-12 -12 24 24"><g stroke="#fff" stroke-width="1.5" fill="none" stroke-linecap="square"><path d="M-9.5,-9.5 L-3.2,-3.2 M-9.5,-4.3 V-9.5 H-4.3"/><path d="M9.5,-9.5 L3.2,-3.2 M9.5,-4.3 V-9.5 H4.3"/><path d="M-9.5,9.5 L-3.2,3.2 M-9.5,4.3 V9.5 H-4.3"/><path d="M9.5,9.5 L3.2,3.2 M9.5,4.3 V9.5 H4.3"/></g></svg><div style="left:8.00px;top:115.40px;width:172.90px;height:23.60px;background:rgba(0,0,0,0.58);border-radius:12px;"></div></div>
<span class="t" style="left:1524.40px;top:381.23px;font-size:15.50px;line-height:15.50px;color:rgba(255,255,255,0.8);font-weight:700;letter-spacing:-0.529px;">Kardos Szilvia Mirtill</span>
<svg style="left:1671.30px;top:386.50px;" width="10" height="7" viewBox="0 0 10 7"><path d="M1.5,1.8 L5,5.2 L8.5,1.8" stroke="#d8d8d8" stroke-width="1.5" fill="none"/></svg>
<div style="left:1718.00px;top:261.80px;width:198.00px;height:148.00px;border-radius:5.5px;overflow:hidden;background:#888;"><svg style="left:0;top:0" width="198" height="148" viewBox="0 0 198 148"><defs><filter id="pb4" x="-10%" y="-10%" width="120%" height="120%"><feGaussianBlur stdDeviation="1.3"/></filter><linearGradient id="p4a" x1="0" y1="0" x2="1" y2="0"><stop offset="0" stop-color="#dfe0e4"/><stop offset="0.6" stop-color="#e8e9ec"/><stop offset="1" stop-color="#e2e4e8"/></linearGradient></defs><g filter="url(#pb4)"><rect x="-10.0" y="-10.0" width="218.0" height="168.0" fill="url(#p4a)" /><rect x="-5.0" y="5.0" width="85.5" height="62.3" fill="#c8a870" /><rect x="-5.0" y="8.5" width="82.0" height="55.5" fill="#cdb07c" /><rect x="0.5" y="18.4" width="40.8" height="37.0" fill="#5c8cb2" /><rect x="0.5" y="18.4" width="40.8" height="11.6" fill="#8fb4cc" /><polygon points="10.0,44.0 41.3,36.0 41.3,55.4 18.0,55.4" fill="#d6e4e8" /><rect x="47.2" y="14.0" width="25.2" height="23.6" fill="#38383c" /><rect x="52.0" y="20.0" width="14.0" height="10.0" fill="#6a625a" /><rect x="47.2" y="39.0" width="24.4" height="15.0" fill="#c9ced6" /><polygon points="36.0,11.0 52.0,14.0 46.0,38.0 29.4,33.0" fill="#34464e" /><polygon points="40.0,13.0 50.0,15.5 47.0,24.0 37.0,21.0" fill="#5a9ac0" /><polygon points="-5.0,57.0 20.0,60.0 41.3,70.0 36.0,100.0 12.0,107.0 -5.0,100.0" fill="#e3e7f0" /><polygon points="8.0,58.0 20.0,60.0 30.0,76.0 20.0,80.0" fill="#3e5e9e" /><polygon points="14.0,74.0 24.0,78.0 20.0,100.0 12.0,98.0" fill="#cfd6e8" /><polygon points="38.0,52.5 76.8,60.0 70.0,86.0 33.9,76.0" fill="#cbd4c4" /><polygon points="44.0,56.0 66.0,60.0 63.0,70.0 42.0,66.0" fill="#a8bca8" /><rect x="-5.0" y="135.4" width="40.3" height="14.6" fill="#b48c6c" /><polygon points="2.0,118.0 16.0,122.0 14.0,150.0 0.0,150.0" fill="#d4dcea" /><rect x="159.8" y="135.4" width="8.2" height="14.6" fill="#c8a070" /><polygon points="150.0,118.0 162.0,122.0 158.0,132.0 148.0,128.0" fill="#dfe4ee" /><polygon points="35.3,150.0 59.0,135.4 85.7,114.7 100.5,122.0 119.8,113.2 156.8,126.5 165.7,150.0" fill="#c9a55c" /><polygon points="74.0,150.0 86.0,128.0 100.0,136.0 112.0,126.0 124.0,150.0" fill="#b8924a" opacity="0.7"/><ellipse cx="103.5" cy="73.0" rx="34.5" ry="33.5" fill="#4b3b2d" /><rect x="88.0" y="100.0" width="28.0" height="22.0" fill="#b88a70" /><ellipse cx="99.0" cy="86.0" rx="23.5" ry="31.0" fill="#c99c82" /><polygon points="72.0,62.0 100.0,50.0 128.0,60.0 130.0,76.0 118.0,66.0 96.0,62.0 80.0,72.0 74.0,84.0" fill="#4b3b2d" /><rect x="78.0" y="80.0" width="43.0" height="2.2" fill="#3a3034" /><ellipse cx="88.0" cy="85.0" rx="8.0" ry="5.5" fill="#8a7a8c" opacity="0.55"/><ellipse cx="110.0" cy="86.0" rx="8.0" ry="5.5" fill="#8a7a8c" opacity="0.55"/><ellipse cx="98.0" cy="104.0" rx="7.0" ry="1.8" fill="#a8686a" /></g></svg><div style="left:162.00px;top:0.00px;width:36.00px;height:36.30px;background:rgba(0,0,0,0.4);border-radius:0 5px 0 7px;"></div><svg style="left:168.00px;top:6.20px;" width="24" height="24" viewBox="-12 -12 24 24"><g stroke="#fff" stroke-width="1.5" fill="none" stroke-linecap="square"><path d="M-9.5,-9.5 L-3.2,-3.2 M-9.5,-4.3 V-9.5 H-4.3"/><path d="M9.5,-9.5 L3.2,-3.2 M9.5,-4.3 V-9.5 H4.3"/><path d="M-9.5,9.5 L-3.2,3.2 M-9.5,4.3 V9.5 H-4.3"/><path d="M9.5,9.5 L3.2,3.2 M9.5,4.3 V9.5 H4.3"/></g></svg><div style="left:8.00px;top:115.40px;width:143.60px;height:23.60px;background:rgba(0,0,0,0.58);border-radius:12px;"></div></div>
<span class="t" style="left:1737.40px;top:381.23px;font-size:15.50px;line-height:15.50px;color:rgba(255,255,255,0.8);font-weight:700;letter-spacing:-0.749px;">Madarász Eszter</span>
<svg style="left:1855.00px;top:386.50px;" width="10" height="7" viewBox="0 0 10 7"><path d="M1.5,1.8 L5,5.2 L8.5,1.8" stroke="#d8d8d8" stroke-width="1.5" fill="none"/></svg>
<div style="left:958.00px;top:438.00px;width:867.00px;height:487.00px;overflow:hidden;background:#ffeedc;"><svg style="left:0;top:0" width="867" height="487" viewBox="958 438 867 487"><circle cx="1391.7" cy="682" r="329" fill="#ffe4c7"/><path d="M1692.5,438 C1696,451 1702,460 1712.5,467.5 L1783.75,522 C1784,540 1792,566 1825,592.5 L1825,438 Z" fill="#ebc9b2"/><path d="M958,822.5 C975,825.5 988,831 997.5,840 C1005,848 1012,857 1040,893.75 C1080,892.5 1108,905 1126.5,925 L958,925 Z" fill="#ebc9b2"/><circle cx="1706.5" cy="786.25" r="39.25" fill="#dea23c"/><circle cx="1820" cy="895" r="45" fill="#dea23c"/><circle cx="1730.5" cy="771.25" r="39.5" fill="none" stroke="#2a6ad4" stroke-width="1.3"/><polygon points="1247.0,676.5 1251.0,671.0 1406.0,577.5 1412.8,581.5 1412.8,714.8 1258.0,801.0 1247.0,807.0" fill="#dff2fd" /><polygon points="1247.0,676.5 1251.0,671.0 1406.0,577.5 1412.8,581.5 1412.8,599.5 1251.0,690.5 1247.0,693.0" fill="#a9d4ea" /><polygon points="1247.0,676.5 1251.0,671.0 1406.0,577.5 1412.8,581.5 1412.8,584.0 1251.0,674.5 1247.0,679.0" fill="#92c3e2" /><polygon points="1247.0,679.0 1250.5,675.0 1250.5,805.0 1247.0,807.0" fill="#b9dcf0" /><ellipse cx="1262.8" cy="676.0" rx="3.2" ry="4.4" fill="#62b5df" transform="rotate(-30 1262.8 676.0)" /><ellipse cx="1272.6" cy="670.0" rx="3.2" ry="4.4" fill="#62b5df" transform="rotate(-30 1272.6 670.0)" /><ellipse cx="1281.5" cy="665.0" rx="3.2" ry="4.4" fill="#62b5df" transform="rotate(-30 1281.5 665.0)" /><ellipse cx="0" cy="0" rx="27.3" ry="31" fill="#5fb4de" transform="matrix(1,-0.557,0,1,1329,698.7)"/><polygon points="1321.0,691.0 1321.0,716.5 1341.5,693.0" fill="#dff2fd" /><line x1="1341.7" y1="674.6" x2="1364.8" y2="662.6" stroke="#a9d3ea" stroke-width="4.2" stroke-linecap="butt"/><line x1="1341.7" y1="676.4" x2="1364.8" y2="664.4" stroke="#8fc3e3" stroke-width="1.2" stroke-linecap="butt"/><line x1="1346.6" y1="693.0" x2="1369.8" y2="681.0" stroke="#a9d3ea" stroke-width="4.2" stroke-linecap="butt"/><line x1="1346.6" y1="694.8" x2="1369.8" y2="682.8" stroke="#8fc3e3" stroke-width="1.2" stroke-linecap="butt"/><line x1="1351.5" y1="711.5" x2="1374.8" y2="699.5" stroke="#a9d3ea" stroke-width="4.2" stroke-linecap="butt"/><line x1="1351.5" y1="713.3" x2="1374.8" y2="701.3" stroke="#8fc3e3" stroke-width="1.2" stroke-linecap="butt"/><line x1="1356.4" y1="729.9" x2="1379.8" y2="717.9" stroke="#a9d3ea" stroke-width="4.2" stroke-linecap="butt"/><line x1="1356.4" y1="731.7" x2="1379.8" y2="719.7" stroke="#8fc3e3" stroke-width="1.2" stroke-linecap="butt"/><line x1="1361.3" y1="748.4" x2="1384.8" y2="736.4" stroke="#a9d3ea" stroke-width="4.2" stroke-linecap="butt"/><line x1="1361.3" y1="750.2" x2="1384.8" y2="738.2" stroke="#8fc3e3" stroke-width="1.2" stroke-linecap="butt"/><polygon points="1335.4,661.5 1340.6,658.9 1369.4,767.4 1364.2,770.0" fill="#a9d3ea" /><polygon points="1339.2,659.6 1340.8,658.8 1369.6,767.3 1368.0,768.1" fill="#8fc3e3" /><polygon points="1358.4,649.5 1363.6,646.9 1393.0,755.4 1387.8,758.0" fill="#a9d3ea" /><polygon points="1362.2,647.6 1363.8,646.8 1393.2,755.3 1391.6,756.1" fill="#8fc3e3" /><ellipse cx="1366.8" cy="769.4" rx="2.8" ry="1.8" fill="#a9d3ea" /><ellipse cx="1390.4" cy="757.4" rx="2.8" ry="1.8" fill="#a9d3ea" /><polygon points="1293.3,581.0 1341.0,552.5 1343.6,553.6 1344.3,575.8 1336.0,572.5 1296.0,595.5 1293.5,594.0" fill="#f3f8fd" /><polygon points="1293.3,581.0 1293.5,594.0 1296.0,595.5 1295.6,582.3" fill="#cfe4f3" /><line x1="1298.0" y1="583.5" x2="1341.0" y2="558.2" stroke="#5fb4d8" stroke-width="1.1" stroke-linecap="butt"/><line x1="1298.0" y1="587.6" x2="1341.0" y2="562.3" stroke="#5fb4d8" stroke-width="1.1" stroke-linecap="butt"/><line x1="1298.0" y1="591.7" x2="1341.0" y2="566.4" stroke="#5fb4d8" stroke-width="1.1" stroke-linecap="butt"/><line x1="1298.0" y1="595.8" x2="1341.0" y2="570.5" stroke="#5fb4d8" stroke-width="1.1" stroke-linecap="butt"/><polygon points="1333.7,592.0 1378.0,565.0 1380.8,566.0 1381.3,576.5 1343.3,599.5 1336.4,613.0 1334.0,612.0" fill="#f3f8fd" /><polygon points="1333.7,592.0 1334.0,612.0 1336.4,613.0 1336.0,593.2" fill="#cfe4f3" /><line x1="1338.5" y1="593.5" x2="1379.0" y2="569.5" stroke="#5fb4d8" stroke-width="1.1" stroke-linecap="butt"/><line x1="1338.5" y1="597.1" x2="1379.0" y2="573.1" stroke="#5fb4d8" stroke-width="1.1" stroke-linecap="butt"/><line x1="1338.5" y1="600.7" x2="1379.0" y2="576.7" stroke="#5fb4d8" stroke-width="1.1" stroke-linecap="butt"/><line x1="1338.5" y1="604.3" x2="1379.0" y2="580.3" stroke="#5fb4d8" stroke-width="1.1" stroke-linecap="butt"/><ellipse cx="1355.4" cy="557.0" rx="6.6" ry="8.6" fill="#1d55a6" transform="rotate(25 1355.4 557.0)" /><ellipse cx="1356.0" cy="556.5" rx="2.6" ry="3.4" fill="#e8f0fa" transform="rotate(25 1356.0 556.5)" /><ellipse cx="1318.9" cy="607.8" rx="6.6" ry="8.6" fill="#f5d21f" transform="rotate(25 1318.9 607.8)" /><ellipse cx="1319.6" cy="607.2" rx="2.6" ry="3.4" fill="#fff8d8" transform="rotate(25 1319.6 607.2)" /><polygon points="1257.8,643.9 1265.6,657.8 1289.6,672.6 1297.0,702.0 1306.3,700.0 1314.6,692.0 1315.6,670.7 1311.0,656.0 1291.5,644.8 1280.4,639.3" fill="#2b2329" /><ellipse cx="1306.5" cy="706.2" rx="7.2" ry="3.0" fill="#0c0a0c" transform="rotate(32 1306.5 706.2)" /><ellipse cx="1317.0" cy="698.0" rx="7.2" ry="3.0" fill="#0c0a0c" transform="rotate(32 1317.0 698.0)" /><polygon points="1254.4,609.6 1262.0,604.0 1274.0,606.0 1282.2,600.4 1285.0,617.0 1281.3,633.7 1276.7,643.0 1260.0,645.7 1257.2,626.3" fill="#1c5aa8" /><line x1="1280.5" y1="621.0" x2="1296.5" y2="629.5" stroke="#1c5aa8" stroke-width="5.2" stroke-linecap="round"/><ellipse cx="1300.0" cy="632.0" rx="3.6" ry="2.0" fill="#f2b48c" transform="rotate(25 1300.0 632.0)" /><polygon points="1276.7,651.3 1291.5,643.3 1311.0,654.4 1297.0,663.0" fill="#e6e9f1" /><polygon points="1284.0,651.0 1291.0,647.0 1301.0,653.0 1294.5,657.5" fill="#c9cdd8" /><ellipse cx="1279.0" cy="644.0" rx="3.4" ry="2.0" fill="#f2b48c" transform="rotate(35 1279.0 644.0)" /><ellipse cx="1274.5" cy="603.0" rx="4.0" ry="5.0" fill="#f2b48c" /><ellipse cx="1270.0" cy="594.0" rx="11.6" ry="17.2" fill="#f0c020" /><ellipse cx="1274.5" cy="592.0" rx="6.8" ry="9.0" fill="#f2b48c" /><polygon points="1262.0,578.0 1281.0,580.0 1279.5,587.0 1270.5,585.5 1266.0,602.0 1259.0,604.0" fill="#f0c020" /><polygon points="1411.9,680.0 1436.0,683.5 1436.9,752.8 1428.5,752.8 1425.0,700.0 1421.0,746.5 1412.8,746.5" fill="#62b6e8" /><polygon points="1425.0,690.0 1430.5,684.0 1431.5,752.8 1428.5,752.8" fill="#4fa4dc" /><ellipse cx="1413.0" cy="749.0" rx="5.6" ry="2.6" fill="#0c0a0c" transform="rotate(-18 1413.0 749.0)" /><ellipse cx="1427.8" cy="755.6" rx="5.8" ry="2.8" fill="#0c0a0c" transform="rotate(-28 1427.8 755.6)" /><polygon points="1413.7,641.0 1428.5,643.0 1437.8,650.4 1435.4,684.0 1412.5,682.0 1411.0,659.6" fill="#f0c020" /><polygon points="1430.0,645.0 1437.8,650.4 1435.4,684.0 1429.0,683.4" fill="#e6b41c" /><line x1="1413.5" y1="648.0" x2="1390.0" y2="663.0" stroke="#f0c020" stroke-width="5" stroke-linecap="round"/><line x1="1419.0" y1="656.0" x2="1410.5" y2="670.5" stroke="#f0c020" stroke-width="5" stroke-linecap="round"/><ellipse cx="1385.0" cy="662.8" rx="4.2" ry="2.0" fill="#f2b48c" transform="rotate(-12 1385.0 662.8)" /><ellipse cx="1405.8" cy="669.8" rx="4.0" ry="2.0" fill="#f2b48c" transform="rotate(20 1405.8 669.8)" /><ellipse cx="1435.8" cy="637.4" rx="4.4" ry="11.0" fill="#2a1512" transform="rotate(-12 1435.8 637.4)" /><ellipse cx="1423.9" cy="629.0" rx="9.6" ry="10.0" fill="#2a1512" /><ellipse cx="1420.4" cy="634.6" rx="6.2" ry="7.8" fill="#f2b48c" /><polygon points="1414.5,627.0 1431.0,625.0 1431.0,631.0 1414.5,632.0" fill="#2a1512" /><polygon points="1232.0,800.0 1260.0,803.7 1261.0,876.5 1249.8,876.5 1245.5,829.6 1239.8,867.0 1231.3,865.0" fill="#2e4050" /><polygon points="1252.0,803.0 1260.0,803.7 1261.0,876.5 1255.0,876.5" fill="#3a4f61" /><ellipse cx="1260.5" cy="879.8" rx="7.4" ry="2.8" fill="#0c0a0c" transform="rotate(8 1260.5 879.8)" /><ellipse cx="1237.5" cy="867.8" rx="4.6" ry="2.6" fill="#0c0a0c" transform="rotate(-35 1237.5 867.8)" /><line x1="1257.5" y1="777.5" x2="1283.5" y2="769.5" stroke="#f2b48c" stroke-width="4.4" stroke-linecap="round"/><ellipse cx="1286.0" cy="768.3" rx="3.6" ry="2.2" fill="#f2b48c" transform="rotate(-25 1286.0 768.3)" /><line x1="1256.0" y1="768.0" x2="1263.5" y2="761.5" stroke="#f2b48c" stroke-width="4" stroke-linecap="round"/><ellipse cx="1265.5" cy="760.0" rx="3.4" ry="2.2" fill="#f2b48c" transform="rotate(-30 1265.5 760.0)" /><polygon points="1225.7,751.0 1234.0,748.0 1248.0,753.7 1258.0,764.8 1260.5,803.5 1247.0,807.0 1232.2,798.5 1231.0,774.0" fill="#6fc0ef" /><polygon points="1248.0,753.7 1258.0,764.8 1260.5,803.5 1252.0,805.7 1250.0,775.0" fill="#5fb0e6" /><ellipse cx="1243.0" cy="746.5" rx="4.0" ry="4.6" fill="#f2b48c" /><ellipse cx="1244.4" cy="739.6" rx="5.6" ry="8.0" fill="#f2b48c" /><ellipse cx="1238.8" cy="735.6" rx="9.0" ry="9.6" fill="#3a2014" /><polygon points="1236.0,742.0 1243.5,738.0 1244.0,746.0 1238.0,748.5" fill="#3a2014" /><polygon points="1298.0,783.3 1307.4,788.8 1307.4,847.2 1298.0,841.7" fill="#e8b422" /><polygon points="1307.4,788.8 1317.4,783.3 1317.4,841.7 1307.4,847.2" fill="#f2c620" /><polygon points="1298.0,783.3 1307.4,777.8 1317.4,783.3 1307.4,788.8" fill="#fde55c" /><polygon points="1317.4,786.8 1325.7,792.1 1325.7,837.0 1317.4,832.4" fill="#e8b422" /><polygon points="1325.7,792.1 1334.0,786.8 1334.0,832.4 1325.7,837.0" fill="#f2c620" /><polygon points="1317.4,786.8 1325.7,781.5 1334.0,786.8 1325.7,792.1" fill="#fde55c" /><polygon points="1334.0,790.5 1341.5,795.8 1341.5,827.8 1334.0,823.0" fill="#e8b422" /><polygon points="1341.5,795.8 1348.9,790.5 1348.9,823.0 1341.5,827.8" fill="#f2c620" /><polygon points="1334.0,790.5 1341.5,785.2 1348.9,790.5 1341.5,795.8" fill="#fde55c" /><polygon points="1348.9,793.5 1356.3,798.1 1356.3,818.5 1348.9,813.9" fill="#e8b422" /><polygon points="1356.3,798.1 1364.0,793.5 1364.0,813.9 1356.3,818.5" fill="#f2c620" /><polygon points="1348.9,793.5 1356.3,788.9 1364.0,793.5 1356.3,798.1" fill="#fde55c" /><line x1="1443.5" y1="857.0" x2="1446.5" y2="890.5" stroke="#1a4c98" stroke-width="1.6" stroke-linecap="butt"/><line x1="1446.5" y1="857.0" x2="1444.5" y2="875.0" stroke="#1a4c98" stroke-width="1.4" stroke-linecap="butt"/><polygon points="1442.4,866.0 1453.5,866.0 1453.5,877.0 1442.4,877.0" fill="#3a6ab8" /><polygon points="1455.5,868.0 1470.0,866.5 1476.0,874.0 1469.0,878.7 1456.0,878.7" fill="#3f74c2" /><polygon points="1412.8,841.7 1437.8,846.0 1458.0,851.9 1476.7,873.0 1469.3,878.7 1456.3,878.7 1443.3,858.0 1423.0,856.5 1413.5,850.0" fill="#1e5aa8" /><polygon points="1411.0,803.7 1424.0,800.5 1437.8,800.5 1440.6,811.0 1436.9,829.6 1435.5,842.5 1414.6,842.5 1412.0,822.0" fill="#7fcaf3" /><polygon points="1411.0,803.7 1418.0,802.0 1421.0,842.5 1414.6,842.5 1412.0,822.0" fill="#92d5f8" /><line x1="1438.0" y1="815.0" x2="1455.5" y2="821.5" stroke="#7fcaf3" stroke-width="4.6" stroke-linecap="round"/><ellipse cx="1460.0" cy="823.6" rx="4.0" ry="2.2" fill="#f2b48c" transform="rotate(18 1460.0 823.6)" /><polygon points="1435.0,841.7 1448.9,837.0 1446.0,851.0 1433.5,846.5" fill="#c9ced8" /><polygon points="1448.9,837.0 1473.0,826.0 1469.3,840.7 1446.0,851.0" fill="#e1e5ec" /><ellipse cx="1437.5" cy="837.5" rx="4.6" ry="2.2" fill="#f2b48c" transform="rotate(30 1437.5 837.5)" /><ellipse cx="1431.5" cy="801.5" rx="4.0" ry="5.0" fill="#f2b48c" /><ellipse cx="1425.4" cy="789.6" rx="11.0" ry="16.4" fill="#2a1a14" /><ellipse cx="1430.6" cy="790.4" rx="6.2" ry="8.8" fill="#f2b48c" /><polygon points="1420.0,777.0 1436.0,779.0 1435.0,785.5 1427.5,784.5 1423.5,803.0 1417.0,805.0" fill="#2a1a14" /><polygon points="1445.0,793.0 1463.7,811.0 1466.0,805.5 1488.0,799.0 1488.5,790.0 1470.0,783.0" fill="#1e5aa8" /><path d="M1446.2,779.8 L1457,772.6 Q1459,771.3 1461.2,772.5 L1487.6,786 Q1489.6,787.2 1487.6,788.8 L1474,799.6 Q1472,801 1469.6,799.8 L1446.4,783.6 Q1444,781.6 1446.2,779.8 Z" fill="#f5f9fd"/><polygon points="1444.8,782.4 1445.0,787.5 1471.0,805.0 1471.5,800.6" fill="#d5e6f2" /><line x1="1451.5" y1="781.6" x2="1470.5" y2="792.6" stroke="#35a6c4" stroke-width="1.6" stroke-linecap="butt"/><line x1="1455.2" y1="779.2" x2="1474.2" y2="790.2" stroke="#35a6c4" stroke-width="1.6" stroke-linecap="butt"/><line x1="1458.9" y1="776.8" x2="1477.9" y2="787.8" stroke="#35a6c4" stroke-width="1.6" stroke-linecap="butt"/><line x1="1462.6" y1="774.4" x2="1481.6" y2="785.4" stroke="#35a6c4" stroke-width="1.6" stroke-linecap="butt"/><ellipse cx="1493.0" cy="805.6" rx="8.6" ry="5.6" fill="#b02878" /><ellipse cx="1493.0" cy="802.6" rx="8.6" ry="5.6" fill="#ec4ba0" /><ellipse cx="1493.6" cy="802.0" rx="3.4" ry="2.0" fill="#fde6f2" /><polygon points="1561.0,641.0 1585.0,645.0 1587.5,708.0 1579.0,708.0 1575.0,660.0 1573.8,698.0 1564.0,698.0" fill="#2e4050" /><polygon points="1577.0,645.0 1585.0,645.0 1587.5,708.0 1582.5,708.0" fill="#3a4f61" /><ellipse cx="1565.4" cy="701.4" rx="6.0" ry="2.4" fill="#0c0a0c" transform="rotate(-20 1565.4 701.4)" /><ellipse cx="1582.8" cy="711.2" rx="4.0" ry="5.0" fill="#0c0a0c" transform="rotate(20 1582.8 711.2)" /><polygon points="1563.8,602.5 1580.0,601.0 1590.0,607.5 1585.5,646.0 1572.5,648.5 1561.0,641.0" fill="#eef6fc" /><polygon points="1580.0,601.0 1590.0,607.5 1585.5,646.0 1578.5,647.5 1582.0,615.0" fill="#d4eaf8" /><polygon points="1563.8,603.5 1566.5,606.0 1557.0,640.0 1552.3,639.0" fill="#e4f1fb" /><line x1="1585.0" y1="612.0" x2="1570.0" y2="603.0" stroke="#dcedf9" stroke-width="4.4" stroke-linecap="round"/><ellipse cx="1551.8" cy="643.2" rx="2.4" ry="4.0" fill="#f2b48c" transform="rotate(10 1551.8 643.2)" /><ellipse cx="1570.2" cy="594.6" rx="6.2" ry="8.0" fill="#f2b48c" /><ellipse cx="1567.6" cy="601.0" rx="2.6" ry="3.4" fill="#f2b48c" /><polygon points="1561.5,587.0 1566.5,581.0 1575.5,580.0 1580.5,585.5 1579.5,593.0 1576.5,587.5 1566.0,588.5" fill="#3a2218" /><path d="M1546.2,834.5 L1566.5,822.6 Q1568.6,821.5 1570.8,822.8 L1600.2,839 Q1602.4,840.4 1600.2,842 L1580,856.5 L1572,864.5 L1568.5,854 L1546.4,838.4 Q1544,836.4 1546.2,834.5 Z" fill="#4a90c8"/><path d="M1546.2,826.5 L1566.5,814.6 Q1568.6,813.5 1570.8,814.8 L1600.2,831 Q1602.4,832.4 1600.2,834 L1582,846.5 Q1578,849.5 1574.8,848 L1546.4,830.4 Q1544,828.4 1546.2,826.5 Z" fill="#f5f9fd"/><polygon points="1544.8,829.0 1545.0,833.6 1574.0,852.5 1584.0,850.6 1600.8,837.6 1601.0,833.4 1582.0,846.5 1575.0,848.2" fill="#cfe3f2" /><line x1="1553.0" y1="826.4" x2="1575.0" y2="839.0" stroke="#35a6c4" stroke-width="1.6" stroke-linecap="butt"/><line x1="1557.4" y1="823.7" x2="1579.4" y2="836.3" stroke="#35a6c4" stroke-width="1.6" stroke-linecap="butt"/><line x1="1561.8" y1="821.0" x2="1583.8" y2="833.6" stroke="#35a6c4" stroke-width="1.6" stroke-linecap="butt"/><line x1="1566.2" y1="818.3" x2="1588.2" y2="830.9" stroke="#35a6c4" stroke-width="1.6" stroke-linecap="butt"/></svg></div>
<span class="t" style="left:1090.20px;top:472.58px;font-size:33.00px;line-height:33.00px;color:#161b5e;font-family:'DejaVu Sans','Liberation Sans',sans-serif;letter-spacing:0.392px;">Köszönöm megtisztelő figyelmüket!</span>
<div style="left:1770.00px;top:438.00px;width:55.00px;height:37.00px;background:#0f70d7;border-radius:0 0 0 3px;"></div>
<div style="left:1790.00px;top:455.60px;width:15.50px;height:1.80px;background:#fff;"></div>
<div style="left:1789.00px;top:890.00px;width:36.00px;height:35.00px;background:rgba(60,40,10,0.38);border-radius:7px 0 0 0;"></div>
<svg style="left:1795.00px;top:895.50px;" width="24" height="24" viewBox="-12 -12 24 24"><g stroke="#fff" stroke-width="1.5" fill="none" stroke-linecap="square"><path d="M-9.5,-9.5 L-3.2,-3.2 M-9.5,-4.3 V-9.5 H-4.3"/><path d="M9.5,-9.5 L3.2,-3.2 M9.5,-4.3 V-9.5 H4.3"/><path d="M-9.5,9.5 L-3.2,3.2 M-9.5,4.3 V9.5 H-4.3"/><path d="M9.5,9.5 L3.2,3.2 M9.5,4.3 V9.5 H4.3"/></g></svg>
<div style="left:896.00px;top:941.70px;width:62.00px;height:62.00px;background:#0f70d7;border-radius:50%;box-shadow:0 3px 7px rgba(0,0,0,0.55);"></div>
<div style="left:1314.00px;top:941.70px;width:62.00px;height:62.00px;background:#0f70d7;border-radius:50%;box-shadow:0 3px 7px rgba(0,0,0,0.55);"></div>
<div style="left:1407.00px;top:941.70px;width:62.00px;height:62.00px;background:#0f70d7;border-radius:50%;box-shadow:0 3px 7px rgba(0,0,0,0.55);"></div>
<div style="left:1501.00px;top:941.70px;width:62.00px;height:62.00px;background:#0f70d7;border-radius:50%;box-shadow:0 3px 7px rgba(0,0,0,0.55);"></div>
<svg style="left:912.00px;top:957.70px;" width="30" height="30" viewBox="0 0 30 30"><path d="M15,1.5 V28.5 M1.5,15 H28.5" stroke="#fff" stroke-width="2.1" fill="none"/></svg>
<svg style="left:1331.00px;top:956.70px;" width="28" height="32" viewBox="0 0 28 32"><rect x="7.6" y="2.2" width="12.8" height="19" rx="6.4" stroke="#fff" stroke-width="1.7" fill="none"/><path d="M3.6,15 V16.2 A10.4,10.4 0 0 0 24.4,16.2 V15" stroke="#fff" stroke-width="1.7" fill="none"/><path d="M14,26.6 V29.3 M6,29.6 H22" stroke="#fff" stroke-width="1.7" fill="none"/></svg>
<svg style="left:1424.00px;top:960.70px;" width="28" height="24" viewBox="0 0 28 24"><g fill="none" stroke-linecap="round" transform="translate(14 12) scale(0.78) translate(-14 -12)"><path d="M5.6,4.2 Q6.2,18.6 22.2,19.4" stroke="#fff" stroke-width="7"/><path d="M3.6,6.0 L7.6,2.4 M20.4,21.6 L24.2,17.4" stroke="#fff" stroke-width="8.4"/><path d="M5.6,4.2 Q6.2,18.6 22.2,19.4" stroke="#0f70d7" stroke-width="2.4"/><path d="M3.6,6.0 L7.6,2.4 M20.4,21.6 L24.2,17.4" stroke="#0f70d7" stroke-width="3.8"/></g></svg>
<svg style="left:1516.00px;top:962.70px;" width="32" height="20" viewBox="0 0 32 20"><rect x="2.2" y="2.2" width="19.6" height="15" stroke="#fff" stroke-width="1.8" fill="none"/><path d="M21.8,9.7 L29.6,4 V15.4 Z" stroke="#fff" stroke-width="1.8" fill="none" stroke-linejoin="round"/></svg>
<div style="left:0.00px;top:0.00px;width:1920.00px;height:50.00px;background:#20223f;"></div>
<div style="left:320.50px;top:0.00px;width:1.00px;height:49.00px;background:#5d5f75;"></div>
<div style="left:641.50px;top:0.00px;width:1.00px;height:49.00px;background:#5d5f75;"></div>
<svg style="left:13.00px;top:13.00px;" width="26" height="26" viewBox="0 0 26 26"><path d="M2,12 L13,17.5 L13,25 L2,19 Z" fill="#3b4a50"/><path d="M24,12 L13,17.5 L13,25 L24,19 Z" fill="#37a3ec"/><circle cx="13" cy="10" r="8.6" fill="#d9dcdf"/><circle cx="11.5" cy="8" r="5" fill="#eef0f2"/></svg>
<span class="t" style="left:47.00px;top:17.94px;font-size:17.50px;line-height:17.50px;color:#f9f9fa;letter-spacing:-0.231px;width:236px;-webkit-mask-image:linear-gradient(90deg,#000 86%,transparent 100%);mask-image:linear-gradient(90deg,#000 86%,transparent 100%);overflow:hidden;white-space:nowrap;">Pannon Egyetem Webmail :: É</span>
<svg style="left:288.00px;top:19.00px;" width="14" height="14" viewBox="0 0 14 14"><path d="M1,1 L13,13 M13,1 L1,13" stroke="#e4e4ea" stroke-width="2.1" fill="none" stroke-linecap="square"/></svg>
<svg style="left:335.00px;top:13.00px;" width="24" height="26" viewBox="0 0 24 26"><path d="M3,1 L3,23 L22,23" stroke="#e3a957" stroke-width="3.2" fill="none"/></svg>
<span class="t" style="left:367.00px;top:17.94px;font-size:17.50px;line-height:17.50px;color:#f9f9fa;letter-spacing:0.21px;width:237px;-webkit-mask-image:linear-gradient(90deg,#000 84%,transparent 100%);mask-image:linear-gradient(90deg,#000 84%,transparent 100%);overflow:hidden;white-space:nowrap;">Film: Kippkopp és a többiek (2</span>
<svg style="left:609.00px;top:19.00px;" width="14" height="14" viewBox="0 0 14 14"><path d="M1,1 L13,13 M13,1 L1,13" stroke="#e4e4ea" stroke-width="2.1" fill="none" stroke-linecap="square"/></svg>
<svg style="left:654.00px;top:12.00px;" width="26" height="28" viewBox="0 0 26 28"><path d="M1,14 Q13,30 25,14 L25,19 Q13,33 1,19 Z" fill="#c9a13a"/><path d="M4,2 L22,2 L22,17 Q13,24 4,17 Z" fill="#3f6fb4"/><rect x="8" y="4" width="10" height="6" fill="#d9b24a"/><rect x="9" y="12" width="8" height="8" fill="#7aa86a"/><rect x="11" y="14" width="4" height="5" fill="#c0504a"/></svg>
<span class="t" style="left:689.00px;top:17.94px;font-size:17.50px;line-height:17.50px;color:#f9f9fa;letter-spacing:0.12px;">Bírálatok - Pannon Egyetem</span>
<span class="t" style="left:1009.50px;top:17.94px;font-size:17.50px;line-height:17.50px;color:#f9f9fa;letter-spacing:0px;">TDK bírálólap</span>
<svg style="left:1251.00px;top:19.00px;" width="14" height="14" viewBox="0 0 14 14"><path d="M1,1 L13,13 M13,1 L1,13" stroke="#e4e4ea" stroke-width="2.1" fill="none" stroke-linecap="square"/></svg>
<div style="left:962.00px;top:0.00px;width:1.00px;height:49.00px;background:#5d5f75;"></div>
<div style="left:903.00px;top:0.00px;width:115.20px;height:46.00px;background:#ffa830;border:1px solid #ff9500;border-top:none;box-sizing:border-box;"></div>
<div style="left:904.00px;top:1.00px;width:44.00px;height:44.00px;background:#fff;"></div>
<svg style="left:909.80px;top:5.80px;" width="32" height="32" viewBox="0 0 32 32"><defs><radialGradient id="fxa" cx="0.72" cy="0.1" r="1.05"><stop offset="0" stop-color="#fff352"/><stop offset="0.3" stop-color="#ffc038"/><stop offset="0.55" stop-color="#ff7a22"/><stop offset="0.8" stop-color="#ff3b47"/><stop offset="1" stop-color="#e01a88"/></radialGradient><linearGradient id="fxb" x1="0.3" y1="0" x2="0.6" y2="1"><stop offset="0" stop-color="#a45cff"/><stop offset="0.6" stop-color="#7542e5"/><stop offset="1" stop-color="#4a2a9a"/></linearGradient><linearGradient id="fxc" x1="0" y1="0" x2="1" y2="1"><stop offset="0" stop-color="#ffb628"/><stop offset="1" stop-color="#ff5a30"/></linearGradient></defs><path d="M20,0.3 C21.5,2.6 24,4.6 26,7 C29.6,10.6 31.5,14 31.5,18 C31.5,26 24.5,32 16,32 C7.5,32 0.5,26 0.5,17.5 C0.5,13 2,9.5 5.2,6 C5.4,7.2 5.9,8 6.6,8.6 C7.2,7.6 8,7 8.9,6.8 C9.2,7.8 9.8,8.6 10.6,9.2 C12.5,7.2 15.5,6.6 17.3,6.4 C17.8,4 18.8,1.8 20,0.3 Z" fill="url(#fxa)"/><circle cx="15.8" cy="16.8" r="7" fill="url(#fxb)"/><path d="M4.4,14.2 C7,12 10,11.4 12.6,12.5 C13.8,13 14.8,13.8 15.4,14.6 C13,14.4 11.2,15.2 10.5,16.9 C9.8,18.8 10.4,21.2 12.4,22.8 C14.6,24.5 18,24.5 20.4,22.6 C18,26.4 12.8,27.4 9,25 C5.4,22.6 4.2,18.2 4.4,14.2 Z" fill="url(#fxc)"/><path d="M21,3 C24,6 27.6,9.6 28.1,15 C28.4,19 26.8,22.6 24.2,25 C26,21 25.6,16.6 23.4,13.4 C22,11.2 20,9.8 18,9.4 C19.6,7.6 20.6,5.4 21,3 Z" fill="#ffe552" opacity="0.85"/></svg>
<svg style="left:958.00px;top:15.00px;" width="23" height="17" viewBox="0 0 23 17"><rect x="0.3" y="0.6" width="15.2" height="15.2" rx="2.6" fill="#fff"/><path d="M15.3,8 L21.6,0.9 L21.6,15.1 Z" fill="#fff"/></svg>
<svg style="left:992.00px;top:12.00px;" width="14" height="22" viewBox="0 0 14 22"><rect x="3.9" y="0.5" width="6.4" height="14.5" rx="3.2" fill="#fff"/><path d="M1.3,9.7 V11.5 A5.7,5.7 0 0 0 12.7,11.5 V9.7" stroke="#fff" stroke-width="1.5" fill="none"/><path d="M7,17.2 V20.6 M2.6,20.8 H11.4" stroke="#fff" stroke-width="1.5" fill="none"/></svg>
<div style="left:1284.00px;top:0.00px;width:320.00px;height:50.00px;background:#f9f9fa;"></div>
<div style="left:1284.00px;top:0.00px;width:320.00px;height:3.00px;background:#0a84ff;"></div>
<svg style="left:1297.00px;top:13.50px;" width="25" height="25" viewBox="0 0 25 25"><defs><radialGradient id="bbb" cx="0.5" cy="0.35" r="0.7"><stop offset="0" stop-color="#3a4db0"/><stop offset="1" stop-color="#141d6b"/></radialGradient></defs><circle cx="12.5" cy="12.5" r="12.3" fill="url(#bbb)"/><path d="M8.2,5.5 V17.5 M8.2,13 A4.4,4.4 0 1 1 12.6,17.6 H8.2" stroke="#fff" stroke-width="2.6" fill="none"/></svg>
<span class="t" style="left:1331.00px;top:17.94px;font-size:17.50px;line-height:17.50px;color:#0c0c0d;letter-spacing:0.17px;width:206px;-webkit-mask-image:linear-gradient(90deg,#000 80%,transparent 100%);mask-image:linear-gradient(90deg,#000 80%,transparent 100%);overflow:hidden;white-space:nowrap;">BigBlueButton - Turizmus</span>
<svg style="left:1541.00px;top:15.00px;" width="24" height="22" viewBox="0 0 24 22"><path d="M1,7.5 H5.5 L11.5,2 V20 L5.5,14.5 H1 Z" fill="#2a2a2e"/><path d="M14.5,7 A5,5 0 0 1 14.5,15" stroke="#2a2a2e" stroke-width="1.8" fill="none"/><path d="M17,3.5 A9,9 0 0 1 17,18.5" stroke="#2a2a2e" stroke-width="1.8" fill="none"/></svg>
<svg style="left:1572.00px;top:19.00px;" width="14" height="14" viewBox="0 0 14 14"><path d="M1,1 L13,13 M13,1 L1,13" stroke="#1a1a1e" stroke-width="2.4" fill="none" stroke-linecap="square"/></svg>
<svg style="left:1617.00px;top:12.00px;" width="24" height="24" viewBox="0 0 24 24"><path d="M12,2.5 V21.5 M2.5,12 H21.5" stroke="#c6c7d2" stroke-width="3.3" fill="none" stroke-linecap="round"/></svg>
<div style="left:1713.00px;top:0.00px;width:69.00px;height:49.00px;background:#51546c;"></div>
<div style="left:1741.00px;top:23.00px;width:15.00px;height:1.40px;background:#fff;"></div>
<svg style="left:1809.00px;top:16.00px;" width="16" height="16" viewBox="0 0 16 16"><path d="M0.75,4.25 H11.25 V14.75 H0.75 Z M4.25,4 V1.25 H14.75 V11.75 H11.5" stroke="#fff" stroke-width="1.3" fill="none"/></svg>
<svg style="left:1878.00px;top:16.00px;" width="16" height="16" viewBox="0 0 16 16"><path d="M0.5,0.5 L15.5,15.5 M15.5,0.5 L0.5,15.5" stroke="#fff" stroke-width="1.3" fill="none"/></svg>
<div style="left:0.00px;top:50.00px;width:1920.00px;height:60.00px;background:#f9f9fa;"></div>
<div style="left:0.00px;top:49.00px;width:1284.00px;height:1.00px;background:#0d0e22;"></div>
<div style="left:1604.00px;top:49.00px;width:316.00px;height:1.00px;background:#0d0e22;"></div>
<div style="left:0.00px;top:50.00px;width:1920.00px;height:1.00px;background:#fff;"></div>
<div style="left:0.00px;top:110.00px;width:1920.00px;height:1.00px;background:#d9d9dc;"></div>
<div style="left:5.00px;top:54.00px;width:51.00px;height:51.00px;border-radius:50%;border:1px solid #bdbdbf;background:#fdfdfd;box-sizing:border-box;"></div>
<svg style="left:16.00px;top:66.00px;" width="30" height="28" viewBox="0 0 30 28"><path d="M26.5,14 H3.5 M13,4 L3,14 L13,24" stroke="#47474b" stroke-width="3" fill="none" stroke-linecap="round" stroke-linejoin="round"/></svg>
<svg style="left:66.00px;top:67.00px;" width="28" height="26" viewBox="0 0 28 26"><path d="M2.5,13 H24.5 M15.5,3.5 L25,13 L15.5,22.5" stroke="#b4b4b6" stroke-width="2.8" fill="none" stroke-linecap="round" stroke-linejoin="round"/></svg>
<svg style="left:115.00px;top:67.00px;" width="28" height="27" viewBox="0 0 28 27"><path d="M22,8.2 A9.2,9.2 0 1 0 23.2,16.5" stroke="#47474b" stroke-width="3" fill="none" stroke-linecap="round"/><path d="M23.7,2.6 V9.6 H16.7" stroke="#47474b" stroke-width="3" fill="none" stroke-linecap="round" stroke-linejoin="round"/></svg>
<svg style="left:163.00px;top:66.00px;" width="27" height="27" viewBox="0 0 27 27"><path d="M2.5,13.5 L13.5,3 L24.5,13.5 M5.8,11.5 V23.3 H21.2 V11.5" stroke="#47474b" stroke-width="3" fill="none" stroke-linecap="round" stroke-linejoin="round"/><rect x="11.2" y="15.5" width="4.6" height="7.5" rx="0.8" fill="#47474b"/></svg>
<div style="left:287.50px;top:57.50px;width:914.50px;height:44.50px;background:#fff;border:1px solid #cdcdd0;border-radius:3px;box-sizing:border-box;box-shadow:0 1px 2px rgba(0,0,0,0.06);"></div>
<svg style="left:299.00px;top:68.00px;" width="21" height="24" viewBox="0 0 21 24"><path d="M10.5,1.5 C13.5,3 16.5,3.6 19.3,3.8 V10 C19.3,16 15.5,20 10.5,22.3 C5.5,20 1.7,16 1.7,10 V3.8 C4.5,3.6 7.5,3 10.5,1.5 Z" stroke="#58585c" stroke-width="2.3" fill="none" stroke-linejoin="round"/><path d="M10.5,6 C8.8,6.6 7.2,6.9 5.8,7 V10.4 C5.8,14 8,16.6 10.5,18 Z" fill="#58585c"/></svg>
<div style="left:330.30px;top:63.00px;width:1.00px;height:32.00px;background:#e2e2e5;"></div>
<svg style="left:342.00px;top:68.00px;" width="20" height="24" viewBox="0 0 20 24"><path d="M5.2,11 V7 A4.8,4.8 0 0 1 14.8,7 V11" stroke="#5c5c60" stroke-width="2.4" fill="none"/><rect x="1.2" y="10.3" width="17.6" height="12.2" rx="2" fill="#5c5c60"/></svg>
<svg style="left:371.00px;top:71.00px;" width="23" height="18" viewBox="0 0 23 18"><rect x="0.5" y="1" width="15" height="15.5" rx="2.8" fill="#e8605d"/><path d="M15.8,8.8 L21.8,3.2 V14.4 Z" fill="#e8605d"/></svg>
<span class="t" style="left:406.00px;top:70.77px;font-size:20.30px;line-height:20.30px;color:#76767a;letter-spacing:0.356px;">https://elearning.</span>
<span class="t" style="left:562.80px;top:70.77px;font-size:20.30px;line-height:20.30px;color:#0c0c0d;letter-spacing:0.316px;">uni-pannon.hu</span>
<span class="t" style="left:697.00px;top:70.77px;font-size:20.30px;line-height:20.30px;color:#76767a;letter-spacing:0.262px;width:381px;-webkit-mask-image:linear-gradient(90deg,#000 90%,transparent 100%);mask-image:linear-gradient(90deg,#000 90%,transparent 100%);overflow:hidden;white-space:nowrap;">/html5client/join?sessionToken=exwkwttv</span>
<svg style="left:1084.00px;top:76.00px;" width="24" height="8" viewBox="0 0 24 8"><circle cx="4" cy="4" r="2.5" fill="#4a4a4f"/><circle cx="12" cy="4" r="2.5" fill="#4a4a4f"/><circle cx="20" cy="4" r="2.5" fill="#4a4a4f"/></svg>
<svg style="left:1125.00px;top:68.00px;" width="26" height="24" viewBox="0 0 26 24"><path d="M3.5,2 H22.5 A2,2 0 0 1 24.5,4 V10.5 A11.5,11.5 0 0 1 1.5,10.5 V4 A2,2 0 0 1 3.5,2 Z" stroke="#4a4a4f" stroke-width="2.6" fill="none"/><path d="M7.5,9 L13,14.3 L18.5,9" stroke="#4a4a4f" stroke-width="2.8" fill="none" stroke-linecap="round" stroke-linejoin="round"/></svg>
<svg style="left:1167.00px;top:67.00px;" width="26" height="26" viewBox="0 0 26 26"><path d="M13,2.3 L16.3,9.4 L24,10.3 L18.3,15.6 L19.8,23.3 L13,19.5 L6.2,23.3 L7.7,15.6 L2,10.3 L9.7,9.4 Z" stroke="#4a4a4f" stroke-width="2.5" fill="none" stroke-linejoin="round"/></svg>
<div style="left:1217.50px;top:57.50px;width:357.00px;height:44.50px;background:#fff;border:1px solid #cdcdd0;border-radius:3px;box-sizing:border-box;box-shadow:0 1px 2px rgba(0,0,0,0.06);"></div>
<svg style="left:1229.00px;top:67.00px;" width="26" height="26" viewBox="0 0 26 26"><circle cx="10" cy="10" r="7.3" stroke="#8c8c90" stroke-width="2.6" fill="none"/><path d="M15.5,15.5 L23.5,23.5" stroke="#8c8c90" stroke-width="3" stroke-linecap="round"/></svg>
<span class="t" style="left:1263.80px;top:71.74px;font-size:19.50px;line-height:19.50px;color:#8c8c90;letter-spacing:-0.591px;">Keresés</span>
<svg style="left:1673.00px;top:66.00px;" width="26" height="28" viewBox="0 0 26 28"><path d="M13,3.6 V19 M5.4,12.2 L13,19.8 L20.6,12.2" stroke="#0a84ff" stroke-width="3.2" fill="none" stroke-linecap="round" stroke-linejoin="round"/><path d="M5.2,25.2 H20.8" stroke="#0a84ff" stroke-width="3.2" stroke-linecap="round"/></svg>
<svg style="left:1722.00px;top:69.00px;" width="26" height="22" viewBox="0 0 26 22"><path d="M2.8,2.4 V19.8 M8.3,4 V19.8 M13.6,4 V19.8" stroke="#4a4a4f" stroke-width="3.2" stroke-linecap="round"/><path d="M18.2,4.4 L23.2,19.8" stroke="#4a4a4f" stroke-width="3.2" stroke-linecap="round"/></svg>
<svg style="left:1769.00px;top:69.00px;" width="26" height="22" viewBox="0 0 26 22"><rect x="2" y="2" width="22" height="18" rx="3.2" stroke="#4a4a4f" stroke-width="3.1" fill="none"/><path d="M12.7,2 V20" stroke="#4a4a4f" stroke-width="2.2"/><path d="M5,6 H9.5 M5,9.3 H9.5 M5,12.6 H8.5" stroke="#4a4a4f" stroke-width="1.5"/></svg>
<svg style="left:1819.00px;top:69.00px;" width="22" height="22" viewBox="0 0 22 22"><circle cx="11" cy="11" r="10.4" fill="#4a4a4f"/><ellipse cx="11" cy="15" rx="7.2" ry="3.9" fill="#f9f9fa"/><circle cx="11" cy="8.2" r="5.4" fill="#4a4a4f"/><circle cx="11" cy="8.3" r="3.7" fill="#f9f9fa"/></svg>
<div style="left:1859.30px;top:63.00px;width:1.00px;height:42.00px;background:#dcdcdf;"></div>
<svg style="left:1882.00px;top:70.00px;" width="20" height="20" viewBox="0 0 20 20"><path d="M2.2,2.2 H8 M2.2,10 H17.8 M2.2,17.8 H17.8" stroke="#4a4a4f" stroke-width="3" stroke-linecap="round"/></svg>
<svg style="left:1890.70px;top:55.70px;" width="20" height="20" viewBox="0 0 20 20"><circle cx="10" cy="10" r="9.3" fill="#57bd35"/><path d="M10,15 V5.5 M5.8,9.5 L10,5.2 L14.2,9.5" stroke="#fff" stroke-width="2.3" fill="none" stroke-linecap="round" stroke-linejoin="round"/></svg>
<div style="left:1768.00px;top:32.50px;width:91.00px;height:31.00px;background:#fff;border:1px solid #767676;box-sizing:border-box;"></div>
<span class="t" style="left:1777.50px;top:41.03px;font-size:16.80px;line-height:16.80px;color:#000;letter-spacing:0.266px;">Kis méret</span>
<div style="left:0.00px;top:1020.00px;width:1920.00px;height:60.00px;background:#1c1c1c;"></div>
<svg style="left:24.00px;top:1038.00px;" width="25" height="24" viewBox="0 0 25 24"><path d="M0,3.5 L10.5,2 V11.2 H0 Z M12,1.8 L24.3,0 V11.2 H12 Z M0,12.6 H10.5 V21.8 L0,20.4 Z M12,12.6 H24.3 V23.8 L12,22 Z" fill="#fff"/></svg>
<div style="left:72.00px;top:1020.00px;width:515.50px;height:60.00px;background:#f2f2f2;border-top:2px solid #cbcbcb;border-left:2px solid #c6c6c6;border-bottom:2.5px solid #cbcbcb;box-sizing:border-box;"></div>
<svg style="left:88.00px;top:1036.00px;" width="30" height="28" viewBox="0 0 30 28"><circle cx="17.4" cy="10.8" r="8" stroke="#1a1a1a" stroke-width="1.7" fill="none"/><path d="M11.6,16.6 L2.6,25.6" stroke="#1a1a1a" stroke-width="1.9" stroke-linecap="round"/></svg>
<span class="t" style="left:132.50px;top:1042.47px;font-size:21.60px;line-height:21.60px;color:#2b2b2b;letter-spacing:0.297px;">Írjon ide a kereséshez</span>
<svg style="left:611.00px;top:1037.00px;" width="26" height="26" viewBox="0 0 26 26"><path d="M1,2 H17 M1,24 H17" stroke="#fff" stroke-width="1.4"/><path d="M1,2 V4.5 M17,2 V4.5 M1,24 V21.5 M17,24 V21.5" stroke="#fff" stroke-width="1.4"/><rect x="2" y="7.5" width="14" height="11" stroke="#fff" stroke-width="1.5" fill="none"/><path d="M23.5,1 V25" stroke="#fff" stroke-width="1.4"/><rect x="21.8" y="8.5" width="3.4" height="3.4" fill="#fff"/></svg>
<svg style="left:683.00px;top:1034.00px;" width="35" height="32" viewBox="0 0 35 32"><rect x="8" y="0" width="27" height="8" rx="1.5" fill="#41a5ee"/><rect x="8" y="6" width="27" height="2" fill="#41a5ee"/><rect x="8" y="8" width="27" height="8" fill="#2b7cd3"/><rect x="8" y="16" width="27" height="8" fill="#185abd"/><rect x="8" y="24" width="27" height="7.5" rx="1.5" fill="#103f91"/><rect x="8" y="24" width="27" height="2" fill="#103f91"/><rect x="0" y="7" width="17.5" height="17.5" rx="1.6" fill="#1b5ebe"/><text x="8.75" y="20.6" font-family="Liberation Sans,sans-serif" font-weight="700" font-size="13" fill="#fff" text-anchor="middle">W</text></svg>
<div style="left:671.00px;top:1077.00px;width:61.00px;height:3.00px;background:#76e0f5;"></div>
<svg style="left:758.00px;top:1032.00px;" width="36" height="36" viewBox="0 0 36 36"><rect x="0" y="0" width="35.8" height="35.5" rx="6" fill="#fff"/><path d="M17.9,11 C13,3 6.5,5.5 9,9.5 C10.5,11.5 14,11.5 17.9,11 Z M17.9,11 C22.8,3 29.3,5.5 26.8,9.5 C25.3,11.5 21.8,11.5 17.9,11 Z" stroke="#b50000" stroke-width="2.2" fill="none"/><rect x="5" y="12" width="11" height="5.2" fill="#b50000"/><rect x="19.8" y="12" width="11" height="5.2" fill="#b50000"/><rect x="6.4" y="19" width="9.6" height="12.5" fill="#b50000"/><rect x="19.8" y="19" width="9.6" height="12.5" fill="#b50000"/></svg>
<svg style="left:832.50px;top:1034.00px;" width="35" height="32" viewBox="0 0 35 32"><rect x="8" y="0" width="27" height="8" rx="1.5" fill="#33c481"/><rect x="8" y="6" width="27" height="2" fill="#33c481"/><rect x="8" y="8" width="27" height="8" fill="#21a366"/><rect x="8" y="16" width="27" height="8" fill="#107c41"/><rect x="8" y="24" width="27" height="7.5" rx="1.5" fill="#185c37"/><rect x="8" y="24" width="27" height="2" fill="#185c37"/><rect x="0" y="7" width="17.5" height="17.5" rx="1.6" fill="#107c41"/><text x="8.75" y="20.6" font-family="Liberation Sans,sans-serif" font-weight="700" font-size="13" fill="#fff" text-anchor="middle">X</text></svg>
<svg style="left:908.00px;top:1033.00px;" width="36" height="34" viewBox="0 0 36 34"><path d="M9,6 V27 C9,31 35,31 35,27 V6 Z" fill="#b8323c"/><path d="M9,6 V16 C9,20 35,20 35,16 V6 Z" fill="#cf4652"/><ellipse cx="22" cy="6" rx="13" ry="5.2" fill="#e58993"/><rect x="0" y="8" width="17.5" height="17.5" rx="1.6" fill="#a4262c"/><text x="8.75" y="21.6" font-family="Liberation Sans,sans-serif" font-weight="700" font-size="13" fill="#fff" text-anchor="middle">A</text></svg>
<svg style="left:987.50px;top:1032.00px;" width="28" height="36" viewBox="0 0 28 36"><rect x="0" y="0" width="27.5" height="35.5" rx="3" fill="#6f8092"/><rect x="2.6" y="2.6" width="22.3" height="7" rx="1" fill="#4fd2f6"/><rect x="2.8" y="12.6" width="5.6" height="5.6" rx="1" fill="#d5dde5"/><rect x="10.7" y="12.6" width="5.6" height="5.6" rx="1" fill="#d5dde5"/><rect x="18.6" y="12.6" width="5.6" height="5.6" rx="1" fill="#d5dde5"/><rect x="2.8" y="20" width="5.6" height="5.6" rx="1" fill="#d5dde5"/><rect x="10.7" y="20" width="5.6" height="5.6" rx="1" fill="#d5dde5"/><rect x="2.8" y="27.4" width="5.6" height="5.6" rx="1" fill="#d5dde5"/><rect x="10.7" y="27.4" width="5.6" height="5.6" rx="1" fill="#d5dde5"/><rect x="18.6" y="20" width="5.8" height="13" rx="1" fill="#1d62ad"/></svg>
<div style="left:1040.00px;top:1020.00px;width:66.30px;height:60.00px;background:#4a4a4a;"></div>
<div style="left:1108.00px;top:1020.00px;width:4.50px;height:60.00px;background:#3e3e3e;"></div>
<div style="left:1040.00px;top:1077.00px;width:72.50px;height:3.00px;background:#76e0f5;"></div>
<svg style="left:1058.60px;top:1031.40px;" width="34.5" height="34.5" viewBox="0 0 32 32"><defs><radialGradient id="fya" cx="0.72" cy="0.1" r="1.05"><stop offset="0" stop-color="#fff352"/><stop offset="0.3" stop-color="#ffc038"/><stop offset="0.55" stop-color="#ff7a22"/><stop offset="0.8" stop-color="#ff3b47"/><stop offset="1" stop-color="#e01a88"/></radialGradient><linearGradient id="fyb" x1="0.3" y1="0" x2="0.6" y2="1"><stop offset="0" stop-color="#a45cff"/><stop offset="0.6" stop-color="#7542e5"/><stop offset="1" stop-color="#4a2a9a"/></linearGradient><linearGradient id="fyc" x1="0" y1="0" x2="1" y2="1"><stop offset="0" stop-color="#ffb628"/><stop offset="1" stop-color="#ff5a30"/></linearGradient></defs><path d="M20,0.3 C21.5,2.6 24,4.6 26,7 C29.6,10.6 31.5,14 31.5,18 C31.5,26 24.5,32 16,32 C7.5,32 0.5,26 0.5,17.5 C0.5,13 2,9.5 5.2,6 C5.4,7.2 5.9,8 6.6,8.6 C7.2,7.6 8,7 8.9,6.8 C9.2,7.8 9.8,8.6 10.6,9.2 C12.5,7.2 15.5,6.6 17.3,6.4 C17.8,4 18.8,1.8 20,0.3 Z" fill="url(#fya)"/><circle cx="15.8" cy="16.8" r="7" fill="url(#fyb)"/><path d="M4.4,14.2 C7,12 10,11.4 12.6,12.5 C13.8,13 14.8,13.8 15.4,14.6 C13,14.4 11.2,15.2 10.5,16.9 C9.8,18.8 10.4,21.2 12.4,22.8 C14.6,24.5 18,24.5 20.4,22.6 C18,26.4 12.8,27.4 9,25 C5.4,22.6 4.2,18.2 4.4,14.2 Z" fill="url(#fyc)"/><path d="M21,3 C24,6 27.6,9.6 28.1,15 C28.4,19 26.8,22.6 24.2,25 C26,21 25.6,16.6 23.4,13.4 C22,11.2 20,9.8 18,9.4 C19.6,7.6 20.6,5.4 21,3 Z" fill="#ffe552" opacity="0.85"/></svg>
<svg style="left:1135.00px;top:1037.00px;" width="32" height="26" viewBox="0 0 32 26"><path d="M0,2 C0,1 0.8,0 2,0 H11 L14,3 H30 C31.2,3 32,3.8 32,5 V8 H0 Z" fill="#e5a93a"/><rect x="0" y="5" width="32" height="21" rx="1.5" fill="#f9d667"/><path d="M6,26 V15.5 H26 V26 H21.5 V20 H10.5 V26 Z" fill="#3a97de"/></svg>
<div style="left:1121.00px;top:1077.00px;width:61.00px;height:3.00px;background:#76e0f5;"></div>
<svg style="left:1208.00px;top:1033.00px;" width="37" height="33" viewBox="0 0 37 33"><circle cx="20.8" cy="16.5" r="16" fill="#ed6c47"/><path d="M20.8,0.5 A16,16 0 0 1 36.8,16.5 H20.8 Z" fill="#ff8f6b"/><path d="M4.8,16.5 H36.8 A16,16 0 0 1 4.8,16.5 Z" fill="#d35230"/><rect x="0" y="8" width="17.3" height="17.3" rx="1.6" fill="#c43e1c"/><text x="8.7" y="21.4" font-family="Liberation Sans,sans-serif" font-weight="700" font-size="13" fill="#fff" text-anchor="middle">P</text></svg>
<div style="left:1265.00px;top:1020.00px;width:73.00px;height:60.00px;background:#a85f28;"></div>
<div style="left:1265.00px;top:1076.00px;width:73.00px;height:4.00px;background:#f7640e;"></div>
<svg style="left:1283.00px;top:1030.00px;" width="36" height="36" viewBox="0 0 36 36"><defs><linearGradient id="eg1" x1="0" y1="0" x2="1" y2="1"><stop offset="0" stop-color="#2aa8e8"/><stop offset="0.6" stop-color="#35c1c9"/><stop offset="1" stop-color="#5fd35a"/></linearGradient><linearGradient id="eg2" x1="0" y1="0" x2="0" y2="1"><stop offset="0" stop-color="#1b86d9"/><stop offset="1" stop-color="#0c4f9e"/></linearGradient></defs><circle cx="18" cy="18" r="17.6" fill="url(#eg2)"/><path d="M1,15 C3,6 10,0.4 18,0.4 C28,0.4 35.6,8 35.6,16 C35.6,22 31,25 27,25 C23,25 21,23 22.5,20.5 C24,18 22,12.5 16,12.5 C9,12.5 3,17 1,15 Z" fill="url(#eg1)"/><path d="M13,19 C13,27 19,33 27,32 C30,31.6 32.5,30 34,28 C30,31 22,30 19,25 C17.5,22.5 17.5,20 18.5,18 C16,17 13,17 13,19 Z" fill="#0b4a94"/></svg>
<svg style="left:1358.00px;top:1031.00px;" width="36" height="36" viewBox="0 0 36 36"><circle cx="13.5" cy="12.5" r="11.5" fill="#0fa8e6"/><circle cx="22.5" cy="23.5" r="11.5" fill="#0fa8e6"/><circle cx="18" cy="18" r="14.6" fill="#0fa8e6"/><text x="18" y="26" font-family="Liberation Sans,sans-serif" font-weight="700" font-size="22" fill="#fff" text-anchor="middle">S</text></svg>
<div style="left:1346.00px;top:1077.00px;width:61.00px;height:3.00px;background:#76e0f5;"></div>
<svg style="left:1540.00px;top:1044.00px;" width="20" height="11" viewBox="0 0 20 11"><path d="M1,10 L10,1.2 L19,10" stroke="#fff" stroke-width="1.5" fill="none"/></svg>
<svg style="left:1586.00px;top:1043.00px;" width="25" height="15" viewBox="0 0 25 15"><rect x="1.4" y="1.6" width="21" height="12" stroke="#fff" stroke-width="1.3" fill="none"/><rect x="22.6" y="5.2" width="1.8" height="4.8" fill="#fff"/><rect x="3.4" y="3.6" width="11.6" height="8" fill="#fff"/></svg>
<svg style="left:1636.00px;top:1040.00px;" width="22" height="22" viewBox="0 0 22 22"><path d="M2.2,19.5 A17.3,17.3 0 0 1 19.5,2.2" stroke="#9a9a9a" stroke-width="1.3" fill="none"/><path d="M7.2,19.5 A12.3,12.3 0 0 1 19.5,7.2" stroke="#9a9a9a" stroke-width="1.3" fill="none"/><path d="M12.2,19.5 A7.3,7.3 0 0 1 19.5,12.2" stroke="#fff" stroke-width="1.4" fill="none"/><circle cx="18.3" cy="18.6" r="1.7" fill="#fff"/></svg>
<svg style="left:1682.00px;top:1039.00px;" width="25" height="22" viewBox="0 0 25 22"><path d="M1.2,7.5 H4.8 L10,2.2 V19.8 L4.8,14.5 H1.2 Z" stroke="#fff" stroke-width="1.3" fill="none" stroke-linejoin="round"/><path d="M13,8 A4,4 0 0 1 13,14" stroke="#fff" stroke-width="1.3" fill="none"/><path d="M15.8,5 A8,8 0 0 1 15.8,17" stroke="#cfcfcf" stroke-width="1.2" fill="none"/><path d="M18.6,2 A12,12 0 0 1 18.6,20" stroke="#8a8a8a" stroke-width="1.1" fill="none"/></svg>
<span class="t" style="left:1758.60px;top:1029.33px;font-size:16.80px;line-height:16.80px;color:#fff;letter-spacing:-0.100px;">10:14</span>
<span class="t" style="left:1728.60px;top:1056.73px;font-size:16.80px;line-height:16.80px;color:#fff;letter-spacing:0.330px;">2020. 11. 25.</span>
<svg style="left:1858.00px;top:1038.00px;" width="26" height="25" viewBox="0 0 26 25"><path d="M0,0 H24 V18 H17.5 L13,23.5 L8.5,18 H0 Z" fill="#fff"/><path d="M5,5 H19 M5,9 H19 M5,13 H13.5" stroke="#1c1c1c" stroke-width="1.4"/><circle cx="19" cy="18.5" r="6.2" fill="#1c1c1c"/><path d="M17.2,13.8 A5,5 0 1 0 23.6,20.6 A4.4,4.4 0 0 1 17.2,13.8 Z" fill="#fff"/></svg>
<div style="left:1912.50px;top:1020.00px;width:1.00px;height:60.00px;background:#6a6a6a;"></div>
</body></html>
